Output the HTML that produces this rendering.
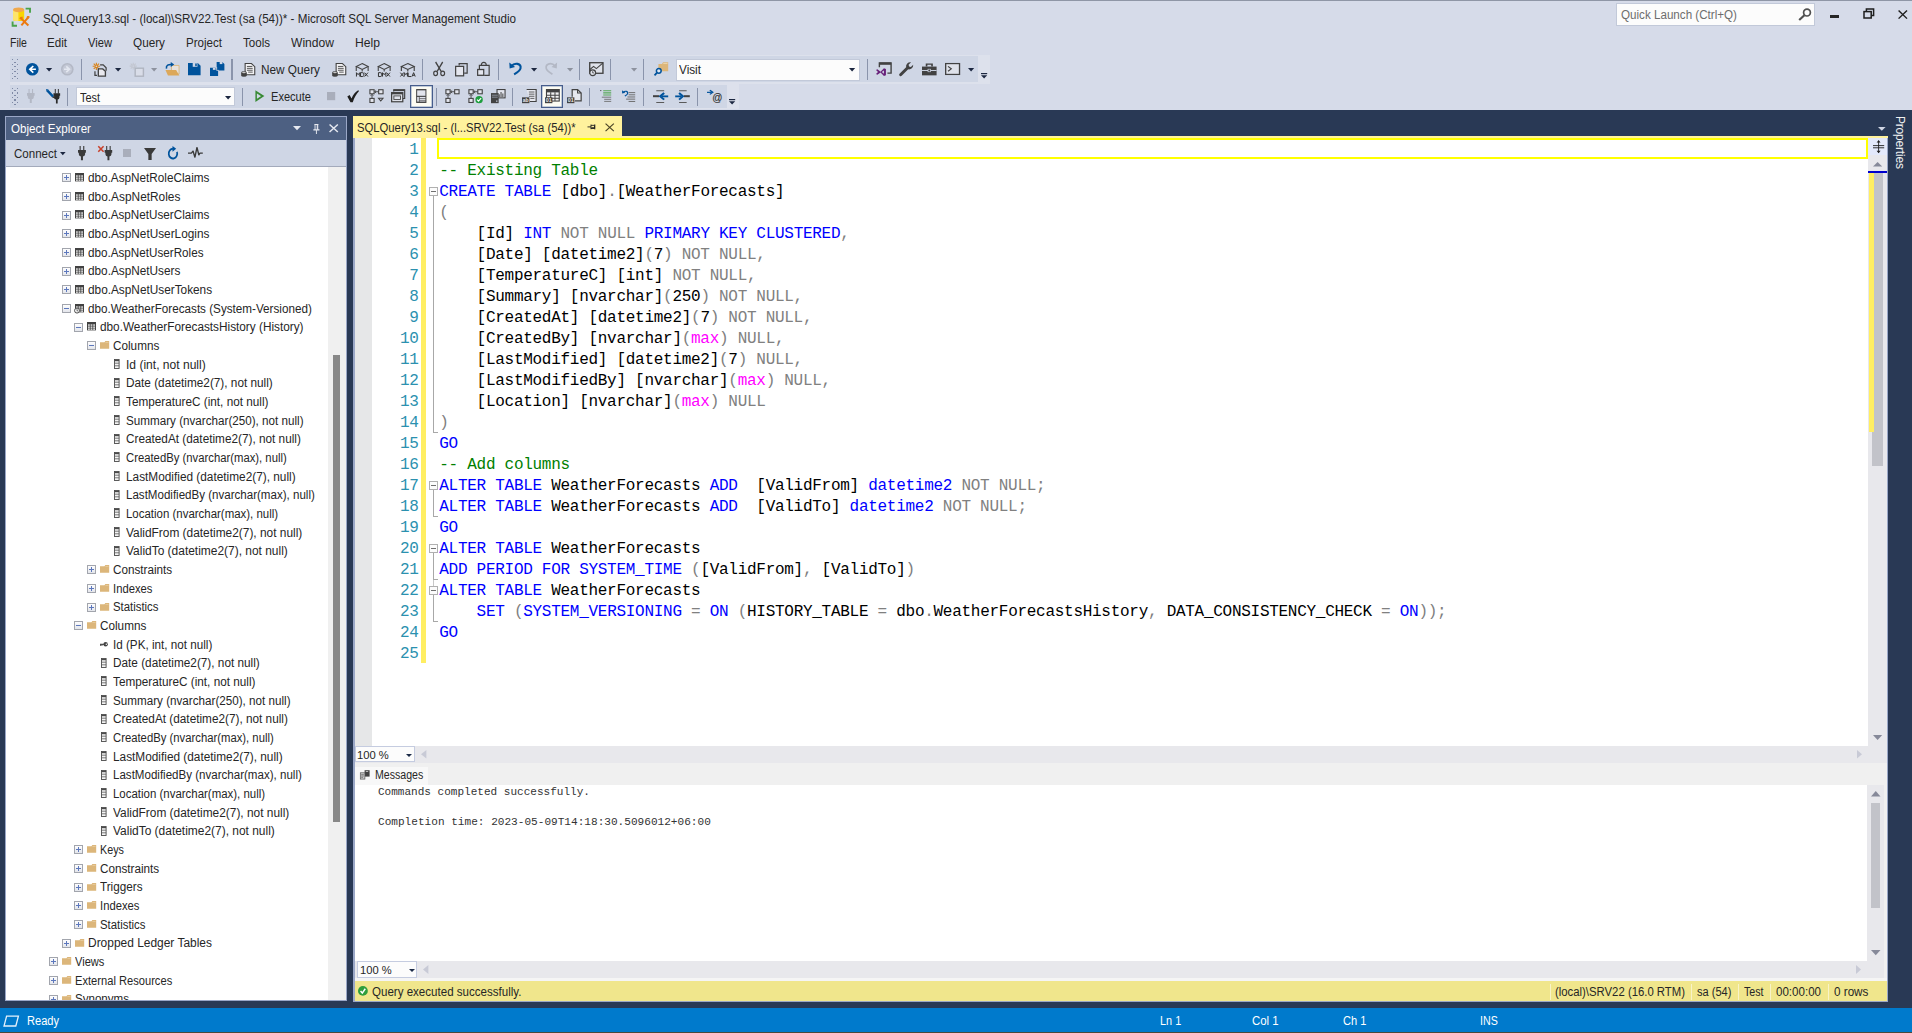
<!DOCTYPE html>
<html><head><meta charset="utf-8"><title>SSMS</title><style>
html,body{margin:0;padding:0;}
body{width:1912px;height:1033px;overflow:hidden;background:#d6dbe9;position:relative;font-family:"Liberation Sans",sans-serif;}
.t{position:absolute;white-space:pre;line-height:1;}
svg{position:absolute;overflow:visible;}
</style></head><body>
<div style="position:absolute;left:0px;top:0px;width:1912px;height:1px;background:#8f96a6;"></div>
<div style="position:absolute;left:10px;top:55px;width:979.7px;height:28.7px;background:#dde1ec;"></div>
<div style="position:absolute;left:10px;top:56.3px;width:968px;height:25.8px;background:#cfd6e5;"></div>
<div style="position:absolute;left:10px;top:83.9px;width:728.5px;height:24.9px;background:#dde1ec;"></div>
<div style="position:absolute;left:10px;top:85px;width:716.6px;height:23px;background:#cfd6e5;"></div>
<div style="position:absolute;left:0px;top:110px;width:1912px;height:898px;background:#293955;"></div>
<div style="position:absolute;left:0px;top:1008px;width:1912px;height:25px;background:#007acc;"></div>
<div style="position:absolute;left:0px;top:1032px;width:1912px;height:1px;background:#4a4a3c;"></div>
<span class="t" id="t0" style="left:43px;top:11.98px;font-size:13px;color:#262626;font-family:'Liberation Sans', sans-serif;transform:scaleX(0.8956);transform-origin:0 0;">SQLQuery13.sql - (local)\SRV22.Test (sa (54))* - Microsoft SQL Server Management Studio</span>
<div style="position:absolute;left:1616px;top:3px;width:199px;height:23px;background:#fcfcfc;border:1px solid #c2c9d9;box-sizing:border-box;"></div>
<span class="t" id="t1" style="left:1621px;top:9.25px;font-size:12.5px;color:#6d6d6d;font-family:'Liberation Sans', sans-serif;transform:scaleX(0.9302);transform-origin:0 0;">Quick Launch (Ctrl+Q)</span>
<span class="t" id="t2" style="left:10px;top:37.25px;font-size:12.5px;color:#262626;font-family:'Liberation Sans', sans-serif;transform:scaleX(0.8434);transform-origin:0 0;">File</span>
<span class="t" id="t3" style="left:47px;top:37.25px;font-size:12.5px;color:#262626;font-family:'Liberation Sans', sans-serif;transform:scaleX(0.9282);transform-origin:0 0;">Edit</span>
<span class="t" id="t4" style="left:88px;top:37.25px;font-size:12.5px;color:#262626;font-family:'Liberation Sans', sans-serif;transform:scaleX(0.8930);transform-origin:0 0;">View</span>
<span class="t" id="t5" style="left:133px;top:37.25px;font-size:12.5px;color:#262626;font-family:'Liberation Sans', sans-serif;transform:scaleX(0.9399);transform-origin:0 0;">Query</span>
<span class="t" id="t6" style="left:186px;top:37.25px;font-size:12.5px;color:#262626;font-family:'Liberation Sans', sans-serif;transform:scaleX(0.9253);transform-origin:0 0;">Project</span>
<span class="t" id="t7" style="left:243px;top:37.25px;font-size:12.5px;color:#262626;font-family:'Liberation Sans', sans-serif;transform:scaleX(0.9251);transform-origin:0 0;">Tools</span>
<span class="t" id="t8" style="left:291px;top:37.25px;font-size:12.5px;color:#262626;font-family:'Liberation Sans', sans-serif;transform:scaleX(0.9670);transform-origin:0 0;">Window</span>
<span class="t" id="t9" style="left:355px;top:37.25px;font-size:12.5px;color:#262626;font-family:'Liberation Sans', sans-serif;transform:scaleX(0.9721);transform-origin:0 0;">Help</span>
<span class="t" id="t10" style="left:261px;top:64.25px;font-size:12.5px;color:#262626;font-family:'Liberation Sans', sans-serif;transform:scaleX(0.9435);transform-origin:0 0;">New Query</span>
<span class="t" id="t11" style="left:271px;top:91.25px;font-size:12.5px;color:#262626;font-family:'Liberation Sans', sans-serif;transform:scaleX(0.8855);transform-origin:0 0;">Execute</span>
<div style="position:absolute;left:675.8px;top:58.5px;width:183.8px;height:22px;background:#fcfcfc;border:1px solid #c2c9d9;box-sizing:border-box;"></div>
<span class="t" id="t12" style="left:679px;top:64.25px;font-size:12.5px;color:#262626;font-family:'Liberation Sans', sans-serif;transform:scaleX(0.9405);transform-origin:0 0;">Visit</span>
<div style="position:absolute;left:76.3px;top:87.4px;width:159.1px;height:18.6px;background:#fcfcfc;border:1px solid #c2c9d9;box-sizing:border-box;"></div>
<span class="t" id="t13" style="left:80px;top:91.75px;font-size:12.5px;color:#262626;font-family:'Liberation Sans', sans-serif;transform:scaleX(0.8719);transform-origin:0 0;">Test</span>
<div style="position:absolute;left:5px;top:116px;width:342.2px;height:885px;background:#9aa7c7;"></div>
<div style="position:absolute;left:6px;top:117px;width:340.1px;height:23px;background:#4d6082;"></div>
<span class="t" id="t14" style="left:11px;top:122.75px;font-size:12.5px;color:#ffffff;font-family:'Liberation Sans', sans-serif;transform:scaleX(0.9285);transform-origin:0 0;">Object Explorer</span>
<div style="position:absolute;left:6px;top:140px;width:340.1px;height:26px;background:#cfd6e5;"></div>
<span class="t" id="t15" style="left:14px;top:148.25px;font-size:12.5px;color:#262626;font-family:'Liberation Sans', sans-serif;transform:scaleX(0.9235);transform-origin:0 0;">Connect</span>
<div style="position:absolute;left:6px;top:166px;width:340.1px;height:1px;background:#a3aabb;"></div>
<div style="position:absolute;left:6px;top:167px;width:340.1px;height:833px;background:#ffffff;"></div>
<div style="position:absolute;left:328.1px;top:167px;width:18px;height:833px;background:#f0f0f0;"></div>
<div style="position:absolute;left:332.8px;top:355px;width:7.2px;height:467px;background:#888888;"></div>
<div style="position:absolute;left:6px;top:167px;width:322px;height:833px;overflow:hidden;">
<span class="t" id="t16" style="left:81.53px;top:4.92px;font-size:12.5px;color:#262626;font-family:'Liberation Sans', sans-serif;transform:scaleX(0.9394);transform-origin:0 0;">dbo.AspNetRoleClaims</span>
<svg style="left:55.73px;top:6.27px" width="9" height="9" viewBox="0 0 9 9" preserveAspectRatio="none"><defs><linearGradient id="eg0" x1="0" y1="0" x2="0" y2="1"><stop offset="0" stop-color="#ffffff"/><stop offset="1" stop-color="#e2e4ea"/></linearGradient></defs><rect x="0.5" y="0.5" width="8" height="8" fill="url(#eg0)" stroke="#a2a5ad" stroke-width="1"/><rect x="2" y="4" width="5" height="1" fill="#5d78bd"/><rect x="4" y="2" width="1" height="5" fill="#5d78bd"/></svg>
<svg style="left:68.53px;top:6.07px" width="9" height="9.4" viewBox="0 0 9 9.4" preserveAspectRatio="none"><rect x="0" y="0" width="9" height="8.4" fill="#424242"/><rect x="1" y="2.4" width="1.8" height="1.3" fill="#f4f4f4"/><rect x="1" y="4.5" width="1.8" height="1.3" fill="#f4f4f4"/><rect x="1" y="6.5" width="1.8" height="1.3" fill="#f4f4f4"/><rect x="3.6" y="2.4" width="1.8" height="1.3" fill="#f4f4f4"/><rect x="3.6" y="4.5" width="1.8" height="1.3" fill="#f4f4f4"/><rect x="3.6" y="6.5" width="1.8" height="1.3" fill="#f4f4f4"/><rect x="6.2" y="2.4" width="1.8" height="1.3" fill="#f4f4f4"/><rect x="6.2" y="4.5" width="1.8" height="1.3" fill="#f4f4f4"/><rect x="6.2" y="6.5" width="1.8" height="1.3" fill="#f4f4f4"/></svg>
<span class="t" id="t17" style="left:81.53px;top:23.5867px;font-size:12.5px;color:#262626;font-family:'Liberation Sans', sans-serif;transform:scaleX(0.9498);transform-origin:0 0;">dbo.AspNetRoles</span>
<svg style="left:55.73px;top:24.9367px" width="9" height="9" viewBox="0 0 9 9" preserveAspectRatio="none"><defs><linearGradient id="eg1" x1="0" y1="0" x2="0" y2="1"><stop offset="0" stop-color="#ffffff"/><stop offset="1" stop-color="#e2e4ea"/></linearGradient></defs><rect x="0.5" y="0.5" width="8" height="8" fill="url(#eg1)" stroke="#a2a5ad" stroke-width="1"/><rect x="2" y="4" width="5" height="1" fill="#5d78bd"/><rect x="4" y="2" width="1" height="5" fill="#5d78bd"/></svg>
<svg style="left:68.53px;top:24.7367px" width="9" height="9.4" viewBox="0 0 9 9.4" preserveAspectRatio="none"><rect x="0" y="0" width="9" height="8.4" fill="#424242"/><rect x="1" y="2.4" width="1.8" height="1.3" fill="#f4f4f4"/><rect x="1" y="4.5" width="1.8" height="1.3" fill="#f4f4f4"/><rect x="1" y="6.5" width="1.8" height="1.3" fill="#f4f4f4"/><rect x="3.6" y="2.4" width="1.8" height="1.3" fill="#f4f4f4"/><rect x="3.6" y="4.5" width="1.8" height="1.3" fill="#f4f4f4"/><rect x="3.6" y="6.5" width="1.8" height="1.3" fill="#f4f4f4"/><rect x="6.2" y="2.4" width="1.8" height="1.3" fill="#f4f4f4"/><rect x="6.2" y="4.5" width="1.8" height="1.3" fill="#f4f4f4"/><rect x="6.2" y="6.5" width="1.8" height="1.3" fill="#f4f4f4"/></svg>
<span class="t" id="t18" style="left:81.53px;top:42.2534px;font-size:12.5px;color:#262626;font-family:'Liberation Sans', sans-serif;transform:scaleX(0.9344);transform-origin:0 0;">dbo.AspNetUserClaims</span>
<svg style="left:55.73px;top:43.6034px" width="9" height="9" viewBox="0 0 9 9" preserveAspectRatio="none"><defs><linearGradient id="eg2" x1="0" y1="0" x2="0" y2="1"><stop offset="0" stop-color="#ffffff"/><stop offset="1" stop-color="#e2e4ea"/></linearGradient></defs><rect x="0.5" y="0.5" width="8" height="8" fill="url(#eg2)" stroke="#a2a5ad" stroke-width="1"/><rect x="2" y="4" width="5" height="1" fill="#5d78bd"/><rect x="4" y="2" width="1" height="5" fill="#5d78bd"/></svg>
<svg style="left:68.53px;top:43.4034px" width="9" height="9.4" viewBox="0 0 9 9.4" preserveAspectRatio="none"><rect x="0" y="0" width="9" height="8.4" fill="#424242"/><rect x="1" y="2.4" width="1.8" height="1.3" fill="#f4f4f4"/><rect x="1" y="4.5" width="1.8" height="1.3" fill="#f4f4f4"/><rect x="1" y="6.5" width="1.8" height="1.3" fill="#f4f4f4"/><rect x="3.6" y="2.4" width="1.8" height="1.3" fill="#f4f4f4"/><rect x="3.6" y="4.5" width="1.8" height="1.3" fill="#f4f4f4"/><rect x="3.6" y="6.5" width="1.8" height="1.3" fill="#f4f4f4"/><rect x="6.2" y="2.4" width="1.8" height="1.3" fill="#f4f4f4"/><rect x="6.2" y="4.5" width="1.8" height="1.3" fill="#f4f4f4"/><rect x="6.2" y="6.5" width="1.8" height="1.3" fill="#f4f4f4"/></svg>
<span class="t" id="t19" style="left:81.53px;top:60.9201px;font-size:12.5px;color:#262626;font-family:'Liberation Sans', sans-serif;transform:scaleX(0.9444);transform-origin:0 0;">dbo.AspNetUserLogins</span>
<svg style="left:55.73px;top:62.2701px" width="9" height="9" viewBox="0 0 9 9" preserveAspectRatio="none"><defs><linearGradient id="eg3" x1="0" y1="0" x2="0" y2="1"><stop offset="0" stop-color="#ffffff"/><stop offset="1" stop-color="#e2e4ea"/></linearGradient></defs><rect x="0.5" y="0.5" width="8" height="8" fill="url(#eg3)" stroke="#a2a5ad" stroke-width="1"/><rect x="2" y="4" width="5" height="1" fill="#5d78bd"/><rect x="4" y="2" width="1" height="5" fill="#5d78bd"/></svg>
<svg style="left:68.53px;top:62.0701px" width="9" height="9.4" viewBox="0 0 9 9.4" preserveAspectRatio="none"><rect x="0" y="0" width="9" height="8.4" fill="#424242"/><rect x="1" y="2.4" width="1.8" height="1.3" fill="#f4f4f4"/><rect x="1" y="4.5" width="1.8" height="1.3" fill="#f4f4f4"/><rect x="1" y="6.5" width="1.8" height="1.3" fill="#f4f4f4"/><rect x="3.6" y="2.4" width="1.8" height="1.3" fill="#f4f4f4"/><rect x="3.6" y="4.5" width="1.8" height="1.3" fill="#f4f4f4"/><rect x="3.6" y="6.5" width="1.8" height="1.3" fill="#f4f4f4"/><rect x="6.2" y="2.4" width="1.8" height="1.3" fill="#f4f4f4"/><rect x="6.2" y="4.5" width="1.8" height="1.3" fill="#f4f4f4"/><rect x="6.2" y="6.5" width="1.8" height="1.3" fill="#f4f4f4"/></svg>
<span class="t" id="t20" style="left:81.53px;top:79.5868px;font-size:12.5px;color:#262626;font-family:'Liberation Sans', sans-serif;transform:scaleX(0.9339);transform-origin:0 0;">dbo.AspNetUserRoles</span>
<svg style="left:55.73px;top:80.9368px" width="9" height="9" viewBox="0 0 9 9" preserveAspectRatio="none"><defs><linearGradient id="eg4" x1="0" y1="0" x2="0" y2="1"><stop offset="0" stop-color="#ffffff"/><stop offset="1" stop-color="#e2e4ea"/></linearGradient></defs><rect x="0.5" y="0.5" width="8" height="8" fill="url(#eg4)" stroke="#a2a5ad" stroke-width="1"/><rect x="2" y="4" width="5" height="1" fill="#5d78bd"/><rect x="4" y="2" width="1" height="5" fill="#5d78bd"/></svg>
<svg style="left:68.53px;top:80.7368px" width="9" height="9.4" viewBox="0 0 9 9.4" preserveAspectRatio="none"><rect x="0" y="0" width="9" height="8.4" fill="#424242"/><rect x="1" y="2.4" width="1.8" height="1.3" fill="#f4f4f4"/><rect x="1" y="4.5" width="1.8" height="1.3" fill="#f4f4f4"/><rect x="1" y="6.5" width="1.8" height="1.3" fill="#f4f4f4"/><rect x="3.6" y="2.4" width="1.8" height="1.3" fill="#f4f4f4"/><rect x="3.6" y="4.5" width="1.8" height="1.3" fill="#f4f4f4"/><rect x="3.6" y="6.5" width="1.8" height="1.3" fill="#f4f4f4"/><rect x="6.2" y="2.4" width="1.8" height="1.3" fill="#f4f4f4"/><rect x="6.2" y="4.5" width="1.8" height="1.3" fill="#f4f4f4"/><rect x="6.2" y="6.5" width="1.8" height="1.3" fill="#f4f4f4"/></svg>
<span class="t" id="t21" style="left:81.53px;top:98.2535px;font-size:12.5px;color:#262626;font-family:'Liberation Sans', sans-serif;transform:scaleX(0.9432);transform-origin:0 0;">dbo.AspNetUsers</span>
<svg style="left:55.73px;top:99.6035px" width="9" height="9" viewBox="0 0 9 9" preserveAspectRatio="none"><defs><linearGradient id="eg5" x1="0" y1="0" x2="0" y2="1"><stop offset="0" stop-color="#ffffff"/><stop offset="1" stop-color="#e2e4ea"/></linearGradient></defs><rect x="0.5" y="0.5" width="8" height="8" fill="url(#eg5)" stroke="#a2a5ad" stroke-width="1"/><rect x="2" y="4" width="5" height="1" fill="#5d78bd"/><rect x="4" y="2" width="1" height="5" fill="#5d78bd"/></svg>
<svg style="left:68.53px;top:99.403px" width="9" height="9.4" viewBox="0 0 9 9.4" preserveAspectRatio="none"><rect x="0" y="0" width="9" height="8.4" fill="#424242"/><rect x="1" y="2.4" width="1.8" height="1.3" fill="#f4f4f4"/><rect x="1" y="4.5" width="1.8" height="1.3" fill="#f4f4f4"/><rect x="1" y="6.5" width="1.8" height="1.3" fill="#f4f4f4"/><rect x="3.6" y="2.4" width="1.8" height="1.3" fill="#f4f4f4"/><rect x="3.6" y="4.5" width="1.8" height="1.3" fill="#f4f4f4"/><rect x="3.6" y="6.5" width="1.8" height="1.3" fill="#f4f4f4"/><rect x="6.2" y="2.4" width="1.8" height="1.3" fill="#f4f4f4"/><rect x="6.2" y="4.5" width="1.8" height="1.3" fill="#f4f4f4"/><rect x="6.2" y="6.5" width="1.8" height="1.3" fill="#f4f4f4"/></svg>
<span class="t" id="t22" style="left:81.53px;top:116.92px;font-size:12.5px;color:#262626;font-family:'Liberation Sans', sans-serif;transform:scaleX(0.9450);transform-origin:0 0;">dbo.AspNetUserTokens</span>
<svg style="left:55.73px;top:118.27px" width="9" height="9" viewBox="0 0 9 9" preserveAspectRatio="none"><defs><linearGradient id="eg6" x1="0" y1="0" x2="0" y2="1"><stop offset="0" stop-color="#ffffff"/><stop offset="1" stop-color="#e2e4ea"/></linearGradient></defs><rect x="0.5" y="0.5" width="8" height="8" fill="url(#eg6)" stroke="#a2a5ad" stroke-width="1"/><rect x="2" y="4" width="5" height="1" fill="#5d78bd"/><rect x="4" y="2" width="1" height="5" fill="#5d78bd"/></svg>
<svg style="left:68.53px;top:118.07px" width="9" height="9.4" viewBox="0 0 9 9.4" preserveAspectRatio="none"><rect x="0" y="0" width="9" height="8.4" fill="#424242"/><rect x="1" y="2.4" width="1.8" height="1.3" fill="#f4f4f4"/><rect x="1" y="4.5" width="1.8" height="1.3" fill="#f4f4f4"/><rect x="1" y="6.5" width="1.8" height="1.3" fill="#f4f4f4"/><rect x="3.6" y="2.4" width="1.8" height="1.3" fill="#f4f4f4"/><rect x="3.6" y="4.5" width="1.8" height="1.3" fill="#f4f4f4"/><rect x="3.6" y="6.5" width="1.8" height="1.3" fill="#f4f4f4"/><rect x="6.2" y="2.4" width="1.8" height="1.3" fill="#f4f4f4"/><rect x="6.2" y="4.5" width="1.8" height="1.3" fill="#f4f4f4"/><rect x="6.2" y="6.5" width="1.8" height="1.3" fill="#f4f4f4"/></svg>
<span class="t" id="t23" style="left:81.53px;top:135.587px;font-size:12.5px;color:#262626;font-family:'Liberation Sans', sans-serif;transform:scaleX(0.9346);transform-origin:0 0;">dbo.WeatherForecasts (System-Versioned)</span>
<svg style="left:55.73px;top:136.937px" width="9" height="9" viewBox="0 0 9 9" preserveAspectRatio="none"><defs><linearGradient id="eg7" x1="0" y1="0" x2="0" y2="1"><stop offset="0" stop-color="#ffffff"/><stop offset="1" stop-color="#e2e4ea"/></linearGradient></defs><rect x="0.5" y="0.5" width="8" height="8" fill="url(#eg7)" stroke="#a2a5ad" stroke-width="1"/><rect x="2" y="4" width="5" height="1" fill="#5d78bd"/></svg>
<svg style="left:69.03px;top:136.737px" width="9" height="9.4" viewBox="0 0 9 9.4" preserveAspectRatio="none"><rect x="0" y="0" width="9" height="8.4" fill="#424242"/><rect x="1" y="2.4" width="1.8" height="1.3" fill="#f4f4f4"/><rect x="1" y="4.5" width="1.8" height="1.3" fill="#f4f4f4"/><rect x="1" y="6.5" width="1.8" height="1.3" fill="#f4f4f4"/><rect x="3.6" y="2.4" width="1.8" height="1.3" fill="#f4f4f4"/><rect x="3.6" y="4.5" width="1.8" height="1.3" fill="#f4f4f4"/><rect x="3.6" y="6.5" width="1.8" height="1.3" fill="#f4f4f4"/><rect x="6.2" y="2.4" width="1.8" height="1.3" fill="#f4f4f4"/><rect x="6.2" y="4.5" width="1.8" height="1.3" fill="#f4f4f4"/><rect x="6.2" y="6.5" width="1.8" height="1.3" fill="#f4f4f4"/><circle cx="2" cy="6.6" r="2.5" fill="#f0f0f0" stroke="#424242" stroke-width="0.9"/><path d="M2 5.2V6.8H3.2" stroke="#424242" stroke-width="0.7" fill="none"/></svg>
<span class="t" id="t24" style="left:94.26px;top:154.254px;font-size:12.5px;color:#262626;font-family:'Liberation Sans', sans-serif;transform:scaleX(0.9429);transform-origin:0 0;">dbo.WeatherForecastsHistory (History)</span>
<svg style="left:68.46px;top:155.604px" width="9" height="9" viewBox="0 0 9 9" preserveAspectRatio="none"><defs><linearGradient id="eg8" x1="0" y1="0" x2="0" y2="1"><stop offset="0" stop-color="#ffffff"/><stop offset="1" stop-color="#e2e4ea"/></linearGradient></defs><rect x="0.5" y="0.5" width="8" height="8" fill="url(#eg8)" stroke="#a2a5ad" stroke-width="1"/><rect x="2" y="4" width="5" height="1" fill="#5d78bd"/></svg>
<svg style="left:81.26px;top:155.404px" width="9" height="9.4" viewBox="0 0 9 9.4" preserveAspectRatio="none"><rect x="0" y="0" width="9" height="8.4" fill="#424242"/><rect x="1" y="2.4" width="1.8" height="1.3" fill="#f4f4f4"/><rect x="1" y="4.5" width="1.8" height="1.3" fill="#f4f4f4"/><rect x="1" y="6.5" width="1.8" height="1.3" fill="#f4f4f4"/><rect x="3.6" y="2.4" width="1.8" height="1.3" fill="#f4f4f4"/><rect x="3.6" y="4.5" width="1.8" height="1.3" fill="#f4f4f4"/><rect x="3.6" y="6.5" width="1.8" height="1.3" fill="#f4f4f4"/><rect x="6.2" y="2.4" width="1.8" height="1.3" fill="#f4f4f4"/><rect x="6.2" y="4.5" width="1.8" height="1.3" fill="#f4f4f4"/><rect x="6.2" y="6.5" width="1.8" height="1.3" fill="#f4f4f4"/></svg>
<span class="t" id="t25" style="left:106.99px;top:172.92px;font-size:12.5px;color:#262626;font-family:'Liberation Sans', sans-serif;transform:scaleX(0.9386);transform-origin:0 0;">Columns</span>
<svg style="left:81.19px;top:174.27px" width="9" height="9" viewBox="0 0 9 9" preserveAspectRatio="none"><defs><linearGradient id="eg9" x1="0" y1="0" x2="0" y2="1"><stop offset="0" stop-color="#ffffff"/><stop offset="1" stop-color="#e2e4ea"/></linearGradient></defs><rect x="0.5" y="0.5" width="8" height="8" fill="url(#eg9)" stroke="#a2a5ad" stroke-width="1"/><rect x="2" y="4" width="5" height="1" fill="#5d78bd"/></svg>
<svg style="left:94.09px;top:174.17px" width="9.2" height="7.7" viewBox="0 0 8.6 7.3" preserveAspectRatio="none"><path d="M0 1.2H4.2L5 0H8.6V7.3H0Z" fill="#dcb67a"/><path d="M5.2 0.9H8V1.5H4.9Z" fill="#efdcb8"/></svg>
<span class="t" id="t26" style="left:119.72px;top:191.587px;font-size:12.5px;color:#262626;font-family:'Liberation Sans', sans-serif;transform:scaleX(0.9639);transform-origin:0 0;">Id (int, not null)</span>
<svg style="left:107.92px;top:192.137px" width="5.6" height="10" viewBox="0 0 5.6 10" preserveAspectRatio="none"><rect x="0.5" y="0.5" width="4.6" height="9" fill="#f4f4f4" stroke="#4a4a4a" stroke-width="0.9"/><path d="M0.5 1.6H5.1" stroke="#4a4a4a" stroke-width="1.2"/><path d="M0.5 4.2H5.1M0.5 6.8H5.1" stroke="#5a5a5a" stroke-width="0.8"/></svg>
<span class="t" id="t27" style="left:119.72px;top:210.254px;font-size:12.5px;color:#262626;font-family:'Liberation Sans', sans-serif;transform:scaleX(0.9432);transform-origin:0 0;">Date (datetime2(7), not null)</span>
<svg style="left:107.92px;top:210.804px" width="5.6" height="10" viewBox="0 0 5.6 10" preserveAspectRatio="none"><rect x="0.5" y="0.5" width="4.6" height="9" fill="#f4f4f4" stroke="#4a4a4a" stroke-width="0.9"/><path d="M0.5 1.6H5.1" stroke="#4a4a4a" stroke-width="1.2"/><path d="M0.5 4.2H5.1M0.5 6.8H5.1" stroke="#5a5a5a" stroke-width="0.8"/></svg>
<span class="t" id="t28" style="left:119.72px;top:228.92px;font-size:12.5px;color:#262626;font-family:'Liberation Sans', sans-serif;transform:scaleX(0.9409);transform-origin:0 0;">TemperatureC (int, not null)</span>
<svg style="left:107.92px;top:229.47px" width="5.6" height="10" viewBox="0 0 5.6 10" preserveAspectRatio="none"><rect x="0.5" y="0.5" width="4.6" height="9" fill="#f4f4f4" stroke="#4a4a4a" stroke-width="0.9"/><path d="M0.5 1.6H5.1" stroke="#4a4a4a" stroke-width="1.2"/><path d="M0.5 4.2H5.1M0.5 6.8H5.1" stroke="#5a5a5a" stroke-width="0.8"/></svg>
<span class="t" id="t29" style="left:119.72px;top:247.587px;font-size:12.5px;color:#262626;font-family:'Liberation Sans', sans-serif;transform:scaleX(0.9330);transform-origin:0 0;">Summary (nvarchar(250), not null)</span>
<svg style="left:107.92px;top:248.137px" width="5.6" height="10" viewBox="0 0 5.6 10" preserveAspectRatio="none"><rect x="0.5" y="0.5" width="4.6" height="9" fill="#f4f4f4" stroke="#4a4a4a" stroke-width="0.9"/><path d="M0.5 1.6H5.1" stroke="#4a4a4a" stroke-width="1.2"/><path d="M0.5 4.2H5.1M0.5 6.8H5.1" stroke="#5a5a5a" stroke-width="0.8"/></svg>
<span class="t" id="t30" style="left:119.72px;top:266.254px;font-size:12.5px;color:#262626;font-family:'Liberation Sans', sans-serif;transform:scaleX(0.9428);transform-origin:0 0;">CreatedAt (datetime2(7), not null)</span>
<svg style="left:107.92px;top:266.804px" width="5.6" height="10" viewBox="0 0 5.6 10" preserveAspectRatio="none"><rect x="0.5" y="0.5" width="4.6" height="9" fill="#f4f4f4" stroke="#4a4a4a" stroke-width="0.9"/><path d="M0.5 1.6H5.1" stroke="#4a4a4a" stroke-width="1.2"/><path d="M0.5 4.2H5.1M0.5 6.8H5.1" stroke="#5a5a5a" stroke-width="0.8"/></svg>
<span class="t" id="t31" style="left:119.72px;top:284.92px;font-size:12.5px;color:#262626;font-family:'Liberation Sans', sans-serif;transform:scaleX(0.9036);transform-origin:0 0;">CreatedBy (nvarchar(max), null)</span>
<svg style="left:107.92px;top:285.47px" width="5.6" height="10" viewBox="0 0 5.6 10" preserveAspectRatio="none"><rect x="0.5" y="0.5" width="4.6" height="9" fill="#f4f4f4" stroke="#4a4a4a" stroke-width="0.9"/><path d="M0.5 1.6H5.1" stroke="#4a4a4a" stroke-width="1.2"/><path d="M0.5 4.2H5.1M0.5 6.8H5.1" stroke="#5a5a5a" stroke-width="0.8"/></svg>
<span class="t" id="t32" style="left:119.72px;top:303.587px;font-size:12.5px;color:#262626;font-family:'Liberation Sans', sans-serif;transform:scaleX(0.9462);transform-origin:0 0;">LastModified (datetime2(7), null)</span>
<svg style="left:107.92px;top:304.137px" width="5.6" height="10" viewBox="0 0 5.6 10" preserveAspectRatio="none"><rect x="0.5" y="0.5" width="4.6" height="9" fill="#f4f4f4" stroke="#4a4a4a" stroke-width="0.9"/><path d="M0.5 1.6H5.1" stroke="#4a4a4a" stroke-width="1.2"/><path d="M0.5 4.2H5.1M0.5 6.8H5.1" stroke="#5a5a5a" stroke-width="0.8"/></svg>
<span class="t" id="t33" style="left:119.72px;top:322.254px;font-size:12.5px;color:#262626;font-family:'Liberation Sans', sans-serif;transform:scaleX(0.9244);transform-origin:0 0;">LastModifiedBy (nvarchar(max), null)</span>
<svg style="left:107.92px;top:322.804px" width="5.6" height="10" viewBox="0 0 5.6 10" preserveAspectRatio="none"><rect x="0.5" y="0.5" width="4.6" height="9" fill="#f4f4f4" stroke="#4a4a4a" stroke-width="0.9"/><path d="M0.5 1.6H5.1" stroke="#4a4a4a" stroke-width="1.2"/><path d="M0.5 4.2H5.1M0.5 6.8H5.1" stroke="#5a5a5a" stroke-width="0.8"/></svg>
<span class="t" id="t34" style="left:119.72px;top:340.921px;font-size:12.5px;color:#262626;font-family:'Liberation Sans', sans-serif;transform:scaleX(0.9160);transform-origin:0 0;">Location (nvarchar(max), null)</span>
<svg style="left:107.92px;top:341.471px" width="5.6" height="10" viewBox="0 0 5.6 10" preserveAspectRatio="none"><rect x="0.5" y="0.5" width="4.6" height="9" fill="#f4f4f4" stroke="#4a4a4a" stroke-width="0.9"/><path d="M0.5 1.6H5.1" stroke="#4a4a4a" stroke-width="1.2"/><path d="M0.5 4.2H5.1M0.5 6.8H5.1" stroke="#5a5a5a" stroke-width="0.8"/></svg>
<span class="t" id="t35" style="left:119.72px;top:359.587px;font-size:12.5px;color:#262626;font-family:'Liberation Sans', sans-serif;transform:scaleX(0.9516);transform-origin:0 0;">ValidFrom (datetime2(7), not null)</span>
<svg style="left:107.92px;top:360.137px" width="5.6" height="10" viewBox="0 0 5.6 10" preserveAspectRatio="none"><rect x="0.5" y="0.5" width="4.6" height="9" fill="#f4f4f4" stroke="#4a4a4a" stroke-width="0.9"/><path d="M0.5 1.6H5.1" stroke="#4a4a4a" stroke-width="1.2"/><path d="M0.5 4.2H5.1M0.5 6.8H5.1" stroke="#5a5a5a" stroke-width="0.8"/></svg>
<span class="t" id="t36" style="left:119.72px;top:378.254px;font-size:12.5px;color:#262626;font-family:'Liberation Sans', sans-serif;transform:scaleX(0.9557);transform-origin:0 0;">ValidTo (datetime2(7), not null)</span>
<svg style="left:107.92px;top:378.804px" width="5.6" height="10" viewBox="0 0 5.6 10" preserveAspectRatio="none"><rect x="0.5" y="0.5" width="4.6" height="9" fill="#f4f4f4" stroke="#4a4a4a" stroke-width="0.9"/><path d="M0.5 1.6H5.1" stroke="#4a4a4a" stroke-width="1.2"/><path d="M0.5 4.2H5.1M0.5 6.8H5.1" stroke="#5a5a5a" stroke-width="0.8"/></svg>
<span class="t" id="t37" style="left:106.99px;top:396.921px;font-size:12.5px;color:#262626;font-family:'Liberation Sans', sans-serif;transform:scaleX(0.9362);transform-origin:0 0;">Constraints</span>
<svg style="left:81.19px;top:398.271px" width="9" height="9" viewBox="0 0 9 9" preserveAspectRatio="none"><defs><linearGradient id="eg21" x1="0" y1="0" x2="0" y2="1"><stop offset="0" stop-color="#ffffff"/><stop offset="1" stop-color="#e2e4ea"/></linearGradient></defs><rect x="0.5" y="0.5" width="8" height="8" fill="url(#eg21)" stroke="#a2a5ad" stroke-width="1"/><rect x="2" y="4" width="5" height="1" fill="#5d78bd"/><rect x="4" y="2" width="1" height="5" fill="#5d78bd"/></svg>
<svg style="left:94.09px;top:398.171px" width="9.2" height="7.7" viewBox="0 0 8.6 7.3" preserveAspectRatio="none"><path d="M0 1.2H4.2L5 0H8.6V7.3H0Z" fill="#dcb67a"/><path d="M5.2 0.9H8V1.5H4.9Z" fill="#efdcb8"/></svg>
<span class="t" id="t38" style="left:106.99px;top:415.587px;font-size:12.5px;color:#262626;font-family:'Liberation Sans', sans-serif;transform:scaleX(0.8999);transform-origin:0 0;">Indexes</span>
<svg style="left:81.19px;top:416.937px" width="9" height="9" viewBox="0 0 9 9" preserveAspectRatio="none"><defs><linearGradient id="eg22" x1="0" y1="0" x2="0" y2="1"><stop offset="0" stop-color="#ffffff"/><stop offset="1" stop-color="#e2e4ea"/></linearGradient></defs><rect x="0.5" y="0.5" width="8" height="8" fill="url(#eg22)" stroke="#a2a5ad" stroke-width="1"/><rect x="2" y="4" width="5" height="1" fill="#5d78bd"/><rect x="4" y="2" width="1" height="5" fill="#5d78bd"/></svg>
<svg style="left:94.09px;top:416.837px" width="9.2" height="7.7" viewBox="0 0 8.6 7.3" preserveAspectRatio="none"><path d="M0 1.2H4.2L5 0H8.6V7.3H0Z" fill="#dcb67a"/><path d="M5.2 0.9H8V1.5H4.9Z" fill="#efdcb8"/></svg>
<span class="t" id="t39" style="left:106.99px;top:434.254px;font-size:12.5px;color:#262626;font-family:'Liberation Sans', sans-serif;transform:scaleX(0.9097);transform-origin:0 0;">Statistics</span>
<svg style="left:81.19px;top:435.604px" width="9" height="9" viewBox="0 0 9 9" preserveAspectRatio="none"><defs><linearGradient id="eg23" x1="0" y1="0" x2="0" y2="1"><stop offset="0" stop-color="#ffffff"/><stop offset="1" stop-color="#e2e4ea"/></linearGradient></defs><rect x="0.5" y="0.5" width="8" height="8" fill="url(#eg23)" stroke="#a2a5ad" stroke-width="1"/><rect x="2" y="4" width="5" height="1" fill="#5d78bd"/><rect x="4" y="2" width="1" height="5" fill="#5d78bd"/></svg>
<svg style="left:94.09px;top:435.504px" width="9.2" height="7.7" viewBox="0 0 8.6 7.3" preserveAspectRatio="none"><path d="M0 1.2H4.2L5 0H8.6V7.3H0Z" fill="#dcb67a"/><path d="M5.2 0.9H8V1.5H4.9Z" fill="#efdcb8"/></svg>
<span class="t" id="t40" style="left:94.26px;top:452.921px;font-size:12.5px;color:#262626;font-family:'Liberation Sans', sans-serif;transform:scaleX(0.9386);transform-origin:0 0;">Columns</span>
<svg style="left:68.46px;top:454.271px" width="9" height="9" viewBox="0 0 9 9" preserveAspectRatio="none"><defs><linearGradient id="eg24" x1="0" y1="0" x2="0" y2="1"><stop offset="0" stop-color="#ffffff"/><stop offset="1" stop-color="#e2e4ea"/></linearGradient></defs><rect x="0.5" y="0.5" width="8" height="8" fill="url(#eg24)" stroke="#a2a5ad" stroke-width="1"/><rect x="2" y="4" width="5" height="1" fill="#5d78bd"/></svg>
<svg style="left:81.36px;top:454.171px" width="9.2" height="7.7" viewBox="0 0 8.6 7.3" preserveAspectRatio="none"><path d="M0 1.2H4.2L5 0H8.6V7.3H0Z" fill="#dcb67a"/><path d="M5.2 0.9H8V1.5H4.9Z" fill="#efdcb8"/></svg>
<span class="t" id="t41" style="left:106.99px;top:471.587px;font-size:12.5px;color:#262626;font-family:'Liberation Sans', sans-serif;transform:scaleX(0.9340);transform-origin:0 0;">Id (PK, int, not null)</span>
<svg style="left:93.89px;top:474.737px" width="7.8" height="4.6" viewBox="0 0 7.8 4.6" preserveAspectRatio="none"><circle cx="5.6" cy="2.3" r="2.2" fill="#424242"/><circle cx="6.3" cy="2.3" r="0.7" fill="#fff"/><path d="M0 2.3H4M0.8 2.3V4M2.2 2.3V3.6" stroke="#424242" stroke-width="1.1" fill="none"/></svg>
<span class="t" id="t42" style="left:106.99px;top:490.254px;font-size:12.5px;color:#262626;font-family:'Liberation Sans', sans-serif;transform:scaleX(0.9432);transform-origin:0 0;">Date (datetime2(7), not null)</span>
<svg style="left:95.19px;top:490.804px" width="5.6" height="10" viewBox="0 0 5.6 10" preserveAspectRatio="none"><rect x="0.5" y="0.5" width="4.6" height="9" fill="#f4f4f4" stroke="#4a4a4a" stroke-width="0.9"/><path d="M0.5 1.6H5.1" stroke="#4a4a4a" stroke-width="1.2"/><path d="M0.5 4.2H5.1M0.5 6.8H5.1" stroke="#5a5a5a" stroke-width="0.8"/></svg>
<span class="t" id="t43" style="left:106.99px;top:508.921px;font-size:12.5px;color:#262626;font-family:'Liberation Sans', sans-serif;transform:scaleX(0.9409);transform-origin:0 0;">TemperatureC (int, not null)</span>
<svg style="left:95.19px;top:509.471px" width="5.6" height="10" viewBox="0 0 5.6 10" preserveAspectRatio="none"><rect x="0.5" y="0.5" width="4.6" height="9" fill="#f4f4f4" stroke="#4a4a4a" stroke-width="0.9"/><path d="M0.5 1.6H5.1" stroke="#4a4a4a" stroke-width="1.2"/><path d="M0.5 4.2H5.1M0.5 6.8H5.1" stroke="#5a5a5a" stroke-width="0.8"/></svg>
<span class="t" id="t44" style="left:106.99px;top:527.588px;font-size:12.5px;color:#262626;font-family:'Liberation Sans', sans-serif;transform:scaleX(0.9330);transform-origin:0 0;">Summary (nvarchar(250), not null)</span>
<svg style="left:95.19px;top:528.138px" width="5.6" height="10" viewBox="0 0 5.6 10" preserveAspectRatio="none"><rect x="0.5" y="0.5" width="4.6" height="9" fill="#f4f4f4" stroke="#4a4a4a" stroke-width="0.9"/><path d="M0.5 1.6H5.1" stroke="#4a4a4a" stroke-width="1.2"/><path d="M0.5 4.2H5.1M0.5 6.8H5.1" stroke="#5a5a5a" stroke-width="0.8"/></svg>
<span class="t" id="t45" style="left:106.99px;top:546.254px;font-size:12.5px;color:#262626;font-family:'Liberation Sans', sans-serif;transform:scaleX(0.9428);transform-origin:0 0;">CreatedAt (datetime2(7), not null)</span>
<svg style="left:95.19px;top:546.804px" width="5.6" height="10" viewBox="0 0 5.6 10" preserveAspectRatio="none"><rect x="0.5" y="0.5" width="4.6" height="9" fill="#f4f4f4" stroke="#4a4a4a" stroke-width="0.9"/><path d="M0.5 1.6H5.1" stroke="#4a4a4a" stroke-width="1.2"/><path d="M0.5 4.2H5.1M0.5 6.8H5.1" stroke="#5a5a5a" stroke-width="0.8"/></svg>
<span class="t" id="t46" style="left:106.99px;top:564.921px;font-size:12.5px;color:#262626;font-family:'Liberation Sans', sans-serif;transform:scaleX(0.9036);transform-origin:0 0;">CreatedBy (nvarchar(max), null)</span>
<svg style="left:95.19px;top:565.471px" width="5.6" height="10" viewBox="0 0 5.6 10" preserveAspectRatio="none"><rect x="0.5" y="0.5" width="4.6" height="9" fill="#f4f4f4" stroke="#4a4a4a" stroke-width="0.9"/><path d="M0.5 1.6H5.1" stroke="#4a4a4a" stroke-width="1.2"/><path d="M0.5 4.2H5.1M0.5 6.8H5.1" stroke="#5a5a5a" stroke-width="0.8"/></svg>
<span class="t" id="t47" style="left:106.99px;top:583.588px;font-size:12.5px;color:#262626;font-family:'Liberation Sans', sans-serif;transform:scaleX(0.9462);transform-origin:0 0;">LastModified (datetime2(7), null)</span>
<svg style="left:95.19px;top:584.138px" width="5.6" height="10" viewBox="0 0 5.6 10" preserveAspectRatio="none"><rect x="0.5" y="0.5" width="4.6" height="9" fill="#f4f4f4" stroke="#4a4a4a" stroke-width="0.9"/><path d="M0.5 1.6H5.1" stroke="#4a4a4a" stroke-width="1.2"/><path d="M0.5 4.2H5.1M0.5 6.8H5.1" stroke="#5a5a5a" stroke-width="0.8"/></svg>
<span class="t" id="t48" style="left:106.99px;top:602.254px;font-size:12.5px;color:#262626;font-family:'Liberation Sans', sans-serif;transform:scaleX(0.9244);transform-origin:0 0;">LastModifiedBy (nvarchar(max), null)</span>
<svg style="left:95.19px;top:602.804px" width="5.6" height="10" viewBox="0 0 5.6 10" preserveAspectRatio="none"><rect x="0.5" y="0.5" width="4.6" height="9" fill="#f4f4f4" stroke="#4a4a4a" stroke-width="0.9"/><path d="M0.5 1.6H5.1" stroke="#4a4a4a" stroke-width="1.2"/><path d="M0.5 4.2H5.1M0.5 6.8H5.1" stroke="#5a5a5a" stroke-width="0.8"/></svg>
<span class="t" id="t49" style="left:106.99px;top:620.921px;font-size:12.5px;color:#262626;font-family:'Liberation Sans', sans-serif;transform:scaleX(0.9160);transform-origin:0 0;">Location (nvarchar(max), null)</span>
<svg style="left:95.19px;top:621.471px" width="5.6" height="10" viewBox="0 0 5.6 10" preserveAspectRatio="none"><rect x="0.5" y="0.5" width="4.6" height="9" fill="#f4f4f4" stroke="#4a4a4a" stroke-width="0.9"/><path d="M0.5 1.6H5.1" stroke="#4a4a4a" stroke-width="1.2"/><path d="M0.5 4.2H5.1M0.5 6.8H5.1" stroke="#5a5a5a" stroke-width="0.8"/></svg>
<span class="t" id="t50" style="left:106.99px;top:639.588px;font-size:12.5px;color:#262626;font-family:'Liberation Sans', sans-serif;transform:scaleX(0.9516);transform-origin:0 0;">ValidFrom (datetime2(7), not null)</span>
<svg style="left:95.19px;top:640.138px" width="5.6" height="10" viewBox="0 0 5.6 10" preserveAspectRatio="none"><rect x="0.5" y="0.5" width="4.6" height="9" fill="#f4f4f4" stroke="#4a4a4a" stroke-width="0.9"/><path d="M0.5 1.6H5.1" stroke="#4a4a4a" stroke-width="1.2"/><path d="M0.5 4.2H5.1M0.5 6.8H5.1" stroke="#5a5a5a" stroke-width="0.8"/></svg>
<span class="t" id="t51" style="left:106.99px;top:658.254px;font-size:12.5px;color:#262626;font-family:'Liberation Sans', sans-serif;transform:scaleX(0.9557);transform-origin:0 0;">ValidTo (datetime2(7), not null)</span>
<svg style="left:95.19px;top:658.804px" width="5.6" height="10" viewBox="0 0 5.6 10" preserveAspectRatio="none"><rect x="0.5" y="0.5" width="4.6" height="9" fill="#f4f4f4" stroke="#4a4a4a" stroke-width="0.9"/><path d="M0.5 1.6H5.1" stroke="#4a4a4a" stroke-width="1.2"/><path d="M0.5 4.2H5.1M0.5 6.8H5.1" stroke="#5a5a5a" stroke-width="0.8"/></svg>
<span class="t" id="t52" style="left:94.26px;top:676.921px;font-size:12.5px;color:#262626;font-family:'Liberation Sans', sans-serif;transform:scaleX(0.8598);transform-origin:0 0;">Keys</span>
<svg style="left:68.46px;top:678.271px" width="9" height="9" viewBox="0 0 9 9" preserveAspectRatio="none"><defs><linearGradient id="eg36" x1="0" y1="0" x2="0" y2="1"><stop offset="0" stop-color="#ffffff"/><stop offset="1" stop-color="#e2e4ea"/></linearGradient></defs><rect x="0.5" y="0.5" width="8" height="8" fill="url(#eg36)" stroke="#a2a5ad" stroke-width="1"/><rect x="2" y="4" width="5" height="1" fill="#5d78bd"/><rect x="4" y="2" width="1" height="5" fill="#5d78bd"/></svg>
<svg style="left:81.36px;top:678.171px" width="9.2" height="7.7" viewBox="0 0 8.6 7.3" preserveAspectRatio="none"><path d="M0 1.2H4.2L5 0H8.6V7.3H0Z" fill="#dcb67a"/><path d="M5.2 0.9H8V1.5H4.9Z" fill="#efdcb8"/></svg>
<span class="t" id="t53" style="left:94.26px;top:695.588px;font-size:12.5px;color:#262626;font-family:'Liberation Sans', sans-serif;transform:scaleX(0.9362);transform-origin:0 0;">Constraints</span>
<svg style="left:68.46px;top:696.938px" width="9" height="9" viewBox="0 0 9 9" preserveAspectRatio="none"><defs><linearGradient id="eg37" x1="0" y1="0" x2="0" y2="1"><stop offset="0" stop-color="#ffffff"/><stop offset="1" stop-color="#e2e4ea"/></linearGradient></defs><rect x="0.5" y="0.5" width="8" height="8" fill="url(#eg37)" stroke="#a2a5ad" stroke-width="1"/><rect x="2" y="4" width="5" height="1" fill="#5d78bd"/><rect x="4" y="2" width="1" height="5" fill="#5d78bd"/></svg>
<svg style="left:81.36px;top:696.838px" width="9.2" height="7.7" viewBox="0 0 8.6 7.3" preserveAspectRatio="none"><path d="M0 1.2H4.2L5 0H8.6V7.3H0Z" fill="#dcb67a"/><path d="M5.2 0.9H8V1.5H4.9Z" fill="#efdcb8"/></svg>
<span class="t" id="t54" style="left:94.26px;top:714.255px;font-size:12.5px;color:#262626;font-family:'Liberation Sans', sans-serif;transform:scaleX(0.9363);transform-origin:0 0;">Triggers</span>
<svg style="left:68.46px;top:715.605px" width="9" height="9" viewBox="0 0 9 9" preserveAspectRatio="none"><defs><linearGradient id="eg38" x1="0" y1="0" x2="0" y2="1"><stop offset="0" stop-color="#ffffff"/><stop offset="1" stop-color="#e2e4ea"/></linearGradient></defs><rect x="0.5" y="0.5" width="8" height="8" fill="url(#eg38)" stroke="#a2a5ad" stroke-width="1"/><rect x="2" y="4" width="5" height="1" fill="#5d78bd"/><rect x="4" y="2" width="1" height="5" fill="#5d78bd"/></svg>
<svg style="left:81.36px;top:715.505px" width="9.2" height="7.7" viewBox="0 0 8.6 7.3" preserveAspectRatio="none"><path d="M0 1.2H4.2L5 0H8.6V7.3H0Z" fill="#dcb67a"/><path d="M5.2 0.9H8V1.5H4.9Z" fill="#efdcb8"/></svg>
<span class="t" id="t55" style="left:94.26px;top:732.921px;font-size:12.5px;color:#262626;font-family:'Liberation Sans', sans-serif;transform:scaleX(0.8999);transform-origin:0 0;">Indexes</span>
<svg style="left:68.46px;top:734.271px" width="9" height="9" viewBox="0 0 9 9" preserveAspectRatio="none"><defs><linearGradient id="eg39" x1="0" y1="0" x2="0" y2="1"><stop offset="0" stop-color="#ffffff"/><stop offset="1" stop-color="#e2e4ea"/></linearGradient></defs><rect x="0.5" y="0.5" width="8" height="8" fill="url(#eg39)" stroke="#a2a5ad" stroke-width="1"/><rect x="2" y="4" width="5" height="1" fill="#5d78bd"/><rect x="4" y="2" width="1" height="5" fill="#5d78bd"/></svg>
<svg style="left:81.36px;top:734.171px" width="9.2" height="7.7" viewBox="0 0 8.6 7.3" preserveAspectRatio="none"><path d="M0 1.2H4.2L5 0H8.6V7.3H0Z" fill="#dcb67a"/><path d="M5.2 0.9H8V1.5H4.9Z" fill="#efdcb8"/></svg>
<span class="t" id="t56" style="left:94.26px;top:751.588px;font-size:12.5px;color:#262626;font-family:'Liberation Sans', sans-serif;transform:scaleX(0.9097);transform-origin:0 0;">Statistics</span>
<svg style="left:68.46px;top:752.938px" width="9" height="9" viewBox="0 0 9 9" preserveAspectRatio="none"><defs><linearGradient id="eg40" x1="0" y1="0" x2="0" y2="1"><stop offset="0" stop-color="#ffffff"/><stop offset="1" stop-color="#e2e4ea"/></linearGradient></defs><rect x="0.5" y="0.5" width="8" height="8" fill="url(#eg40)" stroke="#a2a5ad" stroke-width="1"/><rect x="2" y="4" width="5" height="1" fill="#5d78bd"/><rect x="4" y="2" width="1" height="5" fill="#5d78bd"/></svg>
<svg style="left:81.36px;top:752.838px" width="9.2" height="7.7" viewBox="0 0 8.6 7.3" preserveAspectRatio="none"><path d="M0 1.2H4.2L5 0H8.6V7.3H0Z" fill="#dcb67a"/><path d="M5.2 0.9H8V1.5H4.9Z" fill="#efdcb8"/></svg>
<span class="t" id="t57" style="left:81.53px;top:770.255px;font-size:12.5px;color:#262626;font-family:'Liberation Sans', sans-serif;transform:scaleX(0.9558);transform-origin:0 0;">Dropped Ledger Tables</span>
<svg style="left:55.73px;top:771.605px" width="9" height="9" viewBox="0 0 9 9" preserveAspectRatio="none"><defs><linearGradient id="eg41" x1="0" y1="0" x2="0" y2="1"><stop offset="0" stop-color="#ffffff"/><stop offset="1" stop-color="#e2e4ea"/></linearGradient></defs><rect x="0.5" y="0.5" width="8" height="8" fill="url(#eg41)" stroke="#a2a5ad" stroke-width="1"/><rect x="2" y="4" width="5" height="1" fill="#5d78bd"/><rect x="4" y="2" width="1" height="5" fill="#5d78bd"/></svg>
<svg style="left:68.63px;top:771.505px" width="9.2" height="7.7" viewBox="0 0 8.6 7.3" preserveAspectRatio="none"><path d="M0 1.2H4.2L5 0H8.6V7.3H0Z" fill="#dcb67a"/><path d="M5.2 0.9H8V1.5H4.9Z" fill="#efdcb8"/></svg>
<span class="t" id="t58" style="left:68.8px;top:788.921px;font-size:12.5px;color:#262626;font-family:'Liberation Sans', sans-serif;transform:scaleX(0.8875);transform-origin:0 0;">Views</span>
<svg style="left:43px;top:790.271px" width="9" height="9" viewBox="0 0 9 9" preserveAspectRatio="none"><defs><linearGradient id="eg42" x1="0" y1="0" x2="0" y2="1"><stop offset="0" stop-color="#ffffff"/><stop offset="1" stop-color="#e2e4ea"/></linearGradient></defs><rect x="0.5" y="0.5" width="8" height="8" fill="url(#eg42)" stroke="#a2a5ad" stroke-width="1"/><rect x="2" y="4" width="5" height="1" fill="#5d78bd"/><rect x="4" y="2" width="1" height="5" fill="#5d78bd"/></svg>
<svg style="left:55.9px;top:790.171px" width="9.2" height="7.7" viewBox="0 0 8.6 7.3" preserveAspectRatio="none"><path d="M0 1.2H4.2L5 0H8.6V7.3H0Z" fill="#dcb67a"/><path d="M5.2 0.9H8V1.5H4.9Z" fill="#efdcb8"/></svg>
<span class="t" id="t59" style="left:68.8px;top:807.588px;font-size:12.5px;color:#262626;font-family:'Liberation Sans', sans-serif;transform:scaleX(0.8911);transform-origin:0 0;">External Resources</span>
<svg style="left:43px;top:808.938px" width="9" height="9" viewBox="0 0 9 9" preserveAspectRatio="none"><defs><linearGradient id="eg43" x1="0" y1="0" x2="0" y2="1"><stop offset="0" stop-color="#ffffff"/><stop offset="1" stop-color="#e2e4ea"/></linearGradient></defs><rect x="0.5" y="0.5" width="8" height="8" fill="url(#eg43)" stroke="#a2a5ad" stroke-width="1"/><rect x="2" y="4" width="5" height="1" fill="#5d78bd"/><rect x="4" y="2" width="1" height="5" fill="#5d78bd"/></svg>
<svg style="left:55.9px;top:808.838px" width="9.2" height="7.7" viewBox="0 0 8.6 7.3" preserveAspectRatio="none"><path d="M0 1.2H4.2L5 0H8.6V7.3H0Z" fill="#dcb67a"/><path d="M5.2 0.9H8V1.5H4.9Z" fill="#efdcb8"/></svg>
<span class="t" id="t60" style="left:68.8px;top:826.255px;font-size:12.5px;color:#262626;font-family:'Liberation Sans', sans-serif;transform:scaleX(0.9253);transform-origin:0 0;">Synonyms</span>
<svg style="left:43px;top:827.605px" width="9" height="9" viewBox="0 0 9 9" preserveAspectRatio="none"><defs><linearGradient id="eg44" x1="0" y1="0" x2="0" y2="1"><stop offset="0" stop-color="#ffffff"/><stop offset="1" stop-color="#e2e4ea"/></linearGradient></defs><rect x="0.5" y="0.5" width="8" height="8" fill="url(#eg44)" stroke="#a2a5ad" stroke-width="1"/><rect x="2" y="4" width="5" height="1" fill="#5d78bd"/><rect x="4" y="2" width="1" height="5" fill="#5d78bd"/></svg>
<svg style="left:55.9px;top:827.505px" width="9.2" height="7.7" viewBox="0 0 8.6 7.3" preserveAspectRatio="none"><path d="M0 1.2H4.2L5 0H8.6V7.3H0Z" fill="#dcb67a"/><path d="M5.2 0.9H8V1.5H4.9Z" fill="#efdcb8"/></svg>
</div>
<div style="position:absolute;left:353px;top:116px;width:268.6px;height:22px;background:#fff29d;"></div>
<div style="position:absolute;left:353px;top:136px;width:1535.2px;height:2.4px;background:#fff29d;"></div>
<span class="t" id="t61" style="left:357.4px;top:121.55px;font-size:12.5px;color:#262626;font-family:'Liberation Sans', sans-serif;transform:scaleX(0.9025);transform-origin:0 0;">SQLQuery13.sql - (l...SRV22.Test (sa (54))*</span>
<div style="position:absolute;left:353px;top:138.4px;width:1535px;height:863.6px;background:#9aa7c7;"></div>
<div style="position:absolute;left:354.7px;top:138.4px;width:1532.5px;height:862.6px;background:#e8e8ec;"></div>
<div style="position:absolute;left:354.7px;top:138.4px;width:1513.6px;height:607.6px;background:#ffffff;"></div>
<div style="position:absolute;left:354.7px;top:138.4px;width:17.3px;height:607.6px;background:#e6e7e8;"></div>
<div style="position:absolute;left:421.2px;top:138.4px;width:4.7px;height:524.6px;background:#ffee62;"></div>
<div style="position:absolute;left:437px;top:138.4px;width:1431.2px;height:21px;box-sizing:border-box;border:2.2px solid #ffff00;"></div>
<div class="cl" style="left:380px;top:140.4px;width:38.6px;text-align:right;color:#2b91af;">1</div>
<div class="cl" style="left:380px;top:161.4px;width:38.6px;text-align:right;color:#2b91af;">2</div>
<div class="cl" style="left:439.3px;top:161.4px;"><span style="color:#008000">-- Existing Table</span></div>
<div class="cl" style="left:380px;top:182.4px;width:38.6px;text-align:right;color:#2b91af;">3</div>
<div class="cl" style="left:439.3px;top:182.4px;"><span style="color:#0000ff">CREATE TABLE</span><span style="color:#000000"> [dbo]</span><span style="color:#808080">.</span><span style="color:#000000">[WeatherForecasts]</span></div>
<div class="cl" style="left:380px;top:203.4px;width:38.6px;text-align:right;color:#2b91af;">4</div>
<div class="cl" style="left:439.3px;top:203.4px;"><span style="color:#808080">(</span></div>
<div class="cl" style="left:380px;top:224.4px;width:38.6px;text-align:right;color:#2b91af;">5</div>
<div class="cl" style="left:439.3px;top:224.4px;"><span style="color:#000000">    [Id] </span><span style="color:#0000ff">INT</span><span style="color:#808080"> NOT NULL</span><span style="color:#0000ff"> PRIMARY KEY CLUSTERED</span><span style="color:#808080">,</span></div>
<div class="cl" style="left:380px;top:245.4px;width:38.6px;text-align:right;color:#2b91af;">6</div>
<div class="cl" style="left:439.3px;top:245.4px;"><span style="color:#000000">    [Date] [datetime2]</span><span style="color:#808080">(</span><span style="color:#000000">7</span><span style="color:#808080">) NOT NULL,</span></div>
<div class="cl" style="left:380px;top:266.4px;width:38.6px;text-align:right;color:#2b91af;">7</div>
<div class="cl" style="left:439.3px;top:266.4px;"><span style="color:#000000">    [TemperatureC] [int]</span><span style="color:#808080"> NOT NULL,</span></div>
<div class="cl" style="left:380px;top:287.4px;width:38.6px;text-align:right;color:#2b91af;">8</div>
<div class="cl" style="left:439.3px;top:287.4px;"><span style="color:#000000">    [Summary] [nvarchar]</span><span style="color:#808080">(</span><span style="color:#000000">250</span><span style="color:#808080">) NOT NULL,</span></div>
<div class="cl" style="left:380px;top:308.4px;width:38.6px;text-align:right;color:#2b91af;">9</div>
<div class="cl" style="left:439.3px;top:308.4px;"><span style="color:#000000">    [CreatedAt] [datetime2]</span><span style="color:#808080">(</span><span style="color:#000000">7</span><span style="color:#808080">) NOT NULL,</span></div>
<div class="cl" style="left:380px;top:329.4px;width:38.6px;text-align:right;color:#2b91af;">10</div>
<div class="cl" style="left:439.3px;top:329.4px;"><span style="color:#000000">    [CreatedBy] [nvarchar]</span><span style="color:#808080">(</span><span style="color:#ff00ff">max</span><span style="color:#808080">) NULL,</span></div>
<div class="cl" style="left:380px;top:350.4px;width:38.6px;text-align:right;color:#2b91af;">11</div>
<div class="cl" style="left:439.3px;top:350.4px;"><span style="color:#000000">    [LastModified] [datetime2]</span><span style="color:#808080">(</span><span style="color:#000000">7</span><span style="color:#808080">) NULL,</span></div>
<div class="cl" style="left:380px;top:371.4px;width:38.6px;text-align:right;color:#2b91af;">12</div>
<div class="cl" style="left:439.3px;top:371.4px;"><span style="color:#000000">    [LastModifiedBy] [nvarchar]</span><span style="color:#808080">(</span><span style="color:#ff00ff">max</span><span style="color:#808080">) NULL,</span></div>
<div class="cl" style="left:380px;top:392.4px;width:38.6px;text-align:right;color:#2b91af;">13</div>
<div class="cl" style="left:439.3px;top:392.4px;"><span style="color:#000000">    [Location] [nvarchar]</span><span style="color:#808080">(</span><span style="color:#ff00ff">max</span><span style="color:#808080">) NULL</span></div>
<div class="cl" style="left:380px;top:413.4px;width:38.6px;text-align:right;color:#2b91af;">14</div>
<div class="cl" style="left:439.3px;top:413.4px;"><span style="color:#808080">)</span></div>
<div class="cl" style="left:380px;top:434.4px;width:38.6px;text-align:right;color:#2b91af;">15</div>
<div class="cl" style="left:439.3px;top:434.4px;"><span style="color:#0000ff">GO</span></div>
<div class="cl" style="left:380px;top:455.4px;width:38.6px;text-align:right;color:#2b91af;">16</div>
<div class="cl" style="left:439.3px;top:455.4px;"><span style="color:#008000">-- Add columns</span></div>
<div class="cl" style="left:380px;top:476.4px;width:38.6px;text-align:right;color:#2b91af;">17</div>
<div class="cl" style="left:439.3px;top:476.4px;"><span style="color:#0000ff">ALTER TABLE</span><span style="color:#000000"> WeatherForecasts </span><span style="color:#0000ff">ADD</span><span style="color:#000000">  [ValidFrom] </span><span style="color:#0000ff">datetime2</span><span style="color:#808080"> NOT NULL;</span></div>
<div class="cl" style="left:380px;top:497.4px;width:38.6px;text-align:right;color:#2b91af;">18</div>
<div class="cl" style="left:439.3px;top:497.4px;"><span style="color:#0000ff">ALTER TABLE</span><span style="color:#000000"> WeatherForecasts </span><span style="color:#0000ff">ADD</span><span style="color:#000000">  [ValidTo] </span><span style="color:#0000ff">datetime2</span><span style="color:#808080"> NOT NULL;</span></div>
<div class="cl" style="left:380px;top:518.4px;width:38.6px;text-align:right;color:#2b91af;">19</div>
<div class="cl" style="left:439.3px;top:518.4px;"><span style="color:#0000ff">GO</span></div>
<div class="cl" style="left:380px;top:539.4px;width:38.6px;text-align:right;color:#2b91af;">20</div>
<div class="cl" style="left:439.3px;top:539.4px;"><span style="color:#0000ff">ALTER TABLE</span><span style="color:#000000"> WeatherForecasts</span></div>
<div class="cl" style="left:380px;top:560.4px;width:38.6px;text-align:right;color:#2b91af;">21</div>
<div class="cl" style="left:439.3px;top:560.4px;"><span style="color:#0000ff">ADD PERIOD FOR SYSTEM_TIME</span><span style="color:#808080"> (</span><span style="color:#000000">[ValidFrom]</span><span style="color:#808080">,</span><span style="color:#000000"> [ValidTo]</span><span style="color:#808080">)</span></div>
<div class="cl" style="left:380px;top:581.4px;width:38.6px;text-align:right;color:#2b91af;">22</div>
<div class="cl" style="left:439.3px;top:581.4px;"><span style="color:#0000ff">ALTER TABLE</span><span style="color:#000000"> WeatherForecasts</span></div>
<div class="cl" style="left:380px;top:602.4px;width:38.6px;text-align:right;color:#2b91af;">23</div>
<div class="cl" style="left:439.3px;top:602.4px;"><span style="color:#0000ff">    SET</span><span style="color:#808080"> (</span><span style="color:#0000ff">SYSTEM_VERSIONING</span><span style="color:#808080"> = </span><span style="color:#0000ff">ON</span><span style="color:#808080"> (</span><span style="color:#000000">HISTORY_TABLE</span><span style="color:#808080"> = </span><span style="color:#000000">dbo</span><span style="color:#808080">.</span><span style="color:#000000">WeatherForecastsHistory</span><span style="color:#808080">,</span><span style="color:#000000"> DATA_CONSISTENCY_CHECK</span><span style="color:#808080"> = </span><span style="color:#0000ff">ON</span><span style="color:#808080">));</span></div>
<div class="cl" style="left:380px;top:623.4px;width:38.6px;text-align:right;color:#2b91af;">24</div>
<div class="cl" style="left:439.3px;top:623.4px;"><span style="color:#0000ff">GO</span></div>
<div class="cl" style="left:380px;top:644.4px;width:38.6px;text-align:right;color:#2b91af;">25</div>
<style>.cl{position:absolute;white-space:pre;font-family:"Liberation Mono",monospace;font-size:16px;line-height:21px;height:21px;letter-spacing:-0.278px;}</style>
<div style="position:absolute;left:429.2px;top:187.2px;width:8.4px;height:8.4px;box-sizing:border-box;border:1px solid #b0b0b0;background:#fcfcfc;"></div><div style="position:absolute;left:431.2px;top:190.8px;width:4.4px;height:1.2px;background:#707070;"></div><div style="position:absolute;left:433.1px;top:195.6px;width:1.1px;height:236.3px;background:#a8a8a8;"></div><div style="position:absolute;left:433.1px;top:431.9px;width:4.6px;height:1px;background:#a8a8a8;"></div>
<div style="position:absolute;left:429.2px;top:481.2px;width:8.4px;height:8.4px;box-sizing:border-box;border:1px solid #b0b0b0;background:#fcfcfc;"></div><div style="position:absolute;left:431.2px;top:484.8px;width:4.4px;height:1.2px;background:#707070;"></div><div style="position:absolute;left:433.1px;top:489.6px;width:1.1px;height:26.3px;background:#a8a8a8;"></div><div style="position:absolute;left:433.1px;top:515.9px;width:4.6px;height:1px;background:#a8a8a8;"></div>
<div style="position:absolute;left:429.2px;top:544.2px;width:8.4px;height:8.4px;box-sizing:border-box;border:1px solid #b0b0b0;background:#fcfcfc;"></div><div style="position:absolute;left:431.2px;top:547.8px;width:4.4px;height:1.2px;background:#707070;"></div><div style="position:absolute;left:433.1px;top:552.6px;width:1.1px;height:26.3px;background:#a8a8a8;"></div><div style="position:absolute;left:433.1px;top:578.9px;width:4.6px;height:1px;background:#a8a8a8;"></div><div style="position:absolute;left:433.1px;top:579.9px;width:1.1px;height:6.6px;background:#c8c8c8;"></div>
<div style="position:absolute;left:429.2px;top:586.2px;width:8.4px;height:8.4px;box-sizing:border-box;border:1px solid #b0b0b0;background:#fcfcfc;"></div><div style="position:absolute;left:431.2px;top:589.8px;width:4.4px;height:1.2px;background:#707070;"></div><div style="position:absolute;left:433.1px;top:594.6px;width:1.1px;height:26.3px;background:#a8a8a8;"></div><div style="position:absolute;left:433.1px;top:620.9px;width:4.6px;height:1px;background:#a8a8a8;"></div>
<div style="position:absolute;left:1868.3px;top:138.4px;width:18.9px;height:607.6px;background:#e8e8ec;"></div>
<div style="position:absolute;left:1868.3px;top:138.4px;width:18.9px;height:16.3px;background:#e3e9fb;"></div>
<svg style="left:1872.8px;top:140px" width="11.2" height="13.4" viewBox="0 0 11.2 13.4"><path d="M0 5.6H11.2M0 7.8H11.2" stroke="#1e1e1e" stroke-width="0.9"/><path d="M5.6 0.6V12.8" stroke="#1e1e1e" stroke-width="0.9"/><path d="M3.6 2.6L5.6 0.2L7.6 2.6ZM3.6 10.8L5.6 13.2L7.6 10.8Z" fill="#1e1e1e"/></svg>
<svg style="left:1873px;top:161.8px" width="9.2" height="4.6" viewBox="0 0 9.2 4.6" preserveAspectRatio="none"><path d="M0 4.6L4.6 0L9.2 4.6Z" fill="#868999"/></svg>
<div style="position:absolute;left:1868px;top:171.3px;width:19.2px;height:2px;background:#0000cd;"></div>
<div style="position:absolute;left:1872.2px;top:173.3px;width:10.8px;height:292.8px;background:#c2c3c9;"></div>
<div style="position:absolute;left:1869.3px;top:173.3px;width:4.4px;height:258.4px;background:#ffee62;"></div>
<svg style="left:1873px;top:734.6px" width="9.2" height="5" viewBox="0 0 9.2 5" preserveAspectRatio="none"><path d="M0 0H9.2L4.6 5Z" fill="#868999"/></svg>
<div style="position:absolute;left:354.7px;top:746px;width:1532.5px;height:16.7px;background:#e8e8ec;"></div>
<div style="position:absolute;left:354.7px;top:746.3px;width:60px;height:16.2px;background:#fcfcfc;border:1px solid #c5cce0;box-sizing:border-box;"></div>
<span class="t" id="t62" style="left:357.2px;top:750.39px;font-size:11.5px;color:#262626;font-family:'Liberation Sans', sans-serif;transform:scaleX(0.9752);transform-origin:0 0;">100 %</span>
<svg style="left:406px;top:754px" width="6" height="3" viewBox="0 0 6 3.4" preserveAspectRatio="none"><path d="M0 0H6L3 3.4Z" fill="#1b2a47"/></svg>
<svg style="left:420.6px;top:750.2px" width="5.4" height="8.6" viewBox="0 0 5.4 8.6" preserveAspectRatio="none"><path d="M5.4 0V8.6L0 4.3Z" fill="#c8cad6"/></svg>
<svg style="left:1857px;top:750.2px" width="5" height="8.6" viewBox="0 0 5 8.6" preserveAspectRatio="none"><path d="M0 0V8.6L5 4.3Z" fill="#c8cad6"/></svg>
<div style="position:absolute;left:354.7px;top:762.7px;width:1532.5px;height:22px;background:#f0f0f0;"></div>
<div style="position:absolute;left:355px;top:766.7px;width:73px;height:18px;background:#f8f8f8;"></div>
<svg style="left:360.4px;top:769.8px" width="9.8" height="9.4" viewBox="0 0 9.8 9.4"><rect x="4.6" y="0.2" width="5" height="6.4" fill="#424242"/><rect x="5.8" y="1" width="2.4" height="1" fill="#bbb"/><rect x="0.3" y="2.8" width="4.6" height="6.3" fill="#c8c8c8" stroke="#555" stroke-width="0.7"/><path d="M1.2 4.6H3.8M1.2 6H3.8M1.2 7.4H3" stroke="#555" stroke-width="0.6"/></svg>
<span class="t" id="t63" style="left:375px;top:769.12px;font-size:12px;color:#262626;font-family:'Liberation Sans', sans-serif;transform:scaleX(0.8829);transform-origin:0 0;">Messages</span>
<div style="position:absolute;left:354.7px;top:785px;width:1512.5px;height:176px;background:#ffffff;"></div>
<span class="t" id="t64" style="left:378.2px;top:787.36px;font-size:11px;color:#333333;font-family:'Liberation Mono', monospace;transform:scaleX(1.0036);transform-origin:0 0;">Commands completed successfully.</span>
<span class="t" id="t65" style="left:378.2px;top:817.36px;font-size:11px;color:#333333;font-family:'Liberation Mono', monospace;transform:scaleX(1.0083);transform-origin:0 0;">Completion time: 2023-05-09T14:18:30.5096012+06:00</span>
<div style="position:absolute;left:1867.2px;top:785px;width:17px;height:176px;background:#e8e8ec;"></div>
<div style="position:absolute;left:1884.2px;top:785px;width:3px;height:194px;background:#f0f0f0;"></div>
<svg style="left:1870.8px;top:791.2px" width="9.5" height="5.4" viewBox="0 0 9 4.6" preserveAspectRatio="none"><path d="M0 4.6L4.5 0L9 4.6Z" fill="#868999"/></svg>
<div style="position:absolute;left:1871.3px;top:802.6px;width:8.4px;height:105px;background:#c2c3c9;"></div>
<svg style="left:1870.8px;top:949.6px" width="9.5" height="5.2" viewBox="0 0 9 4.8" preserveAspectRatio="none"><path d="M0 0H9L4.5 4.8Z" fill="#868999"/></svg>
<div style="position:absolute;left:354.7px;top:961px;width:1529.5px;height:17.4px;background:#e8e8ec;"></div>
<div style="position:absolute;left:357.4px;top:961px;width:60px;height:16.6px;background:#fcfcfc;border:1px solid #c5cce0;box-sizing:border-box;"></div>
<span class="t" id="t66" style="left:359.8px;top:965.19px;font-size:11.5px;color:#262626;font-family:'Liberation Sans', sans-serif;transform:scaleX(0.9721);transform-origin:0 0;">100 %</span>
<svg style="left:408.6px;top:968.5px" width="6" height="3" viewBox="0 0 6 3.4" preserveAspectRatio="none"><path d="M0 0H6L3 3.4Z" fill="#1b2a47"/></svg>
<svg style="left:423.4px;top:965px" width="5.4" height="9" viewBox="0 0 5.4 9" preserveAspectRatio="none"><path d="M5.4 0V9L0 4.5Z" fill="#c8cad6"/></svg>
<svg style="left:1856px;top:965px" width="5" height="9" viewBox="0 0 5 9" preserveAspectRatio="none"><path d="M0 0V9L5 4.5Z" fill="#c8cad6"/></svg>
<div style="position:absolute;left:354.7px;top:978.4px;width:1532.5px;height:2.6px;background:#f5f5f5;"></div>
<div style="position:absolute;left:354.7px;top:981px;width:1532.5px;height:20px;background:#f0e68c;"></div>
<svg style="left:357.8px;top:985.8px" width="9.8" height="9.8" viewBox="0 0 10 10"><circle cx="5" cy="5" r="5" fill="#2e9e3c"/><path d="M2.6 5.2L4.4 7.2L7.4 2.8" fill="none" stroke="#fff" stroke-width="1.5"/></svg>
<span class="t" id="t67" style="left:371.6px;top:985.55px;font-size:12.5px;color:#262626;font-family:'Liberation Sans', sans-serif;transform:scaleX(0.9242);transform-origin:0 0;">Query executed successfully.</span>
<span class="t" id="t68" style="left:1555.4px;top:985.55px;font-size:12.5px;color:#262626;font-family:'Liberation Sans', sans-serif;transform:scaleX(0.9069);transform-origin:0 0;">(local)\SRV22 (16.0 RTM)</span>
<span class="t" id="t69" style="left:1697.3px;top:985.55px;font-size:12.5px;color:#262626;font-family:'Liberation Sans', sans-serif;transform:scaleX(0.8842);transform-origin:0 0;">sa (54)</span>
<span class="t" id="t70" style="left:1744px;top:985.55px;font-size:12.5px;color:#262626;font-family:'Liberation Sans', sans-serif;transform:scaleX(0.8545);transform-origin:0 0;">Test</span>
<span class="t" id="t71" style="left:1775.9px;top:985.55px;font-size:12.5px;color:#262626;font-family:'Liberation Sans', sans-serif;transform:scaleX(0.9246);transform-origin:0 0;">00:00:00</span>
<span class="t" id="t72" style="left:1833.6px;top:985.55px;font-size:12.5px;color:#262626;font-family:'Liberation Sans', sans-serif;transform:scaleX(0.9341);transform-origin:0 0;">0 rows</span>
<div style="position:absolute;left:1550px;top:984px;width:1.2px;height:15.5px;background:#f8f3c8;"></div>
<div style="position:absolute;left:1691px;top:984px;width:1.2px;height:15.5px;background:#f8f3c8;"></div>
<div style="position:absolute;left:1738px;top:984px;width:1.2px;height:15.5px;background:#f8f3c8;"></div>
<div style="position:absolute;left:1770px;top:984px;width:1.2px;height:15.5px;background:#f8f3c8;"></div>
<div style="position:absolute;left:1828px;top:984px;width:1.2px;height:15.5px;background:#f8f3c8;"></div>
<svg style="left:0;top:1008px" width="24" height="24" viewBox="0 1008 24 24"><path d="M6.6 1016.2H18.4L15.8 1026H4Z" fill="none" stroke="#e4f1fb" stroke-width="1.3"/></svg>
<span class="t" id="t73" style="left:27px;top:1015.25px;font-size:12.5px;color:#ffffff;font-family:'Liberation Sans', sans-serif;transform:scaleX(0.8854);transform-origin:0 0;">Ready</span>
<span class="t" id="t74" style="left:1159.5px;top:1015.25px;font-size:12.5px;color:#ffffff;font-family:'Liberation Sans', sans-serif;transform:scaleX(0.8709);transform-origin:0 0;">Ln 1</span>
<span class="t" id="t75" style="left:1251.7px;top:1015.25px;font-size:12.5px;color:#ffffff;font-family:'Liberation Sans', sans-serif;transform:scaleX(0.9148);transform-origin:0 0;">Col 1</span>
<span class="t" id="t76" style="left:1343.4px;top:1015.25px;font-size:12.5px;color:#ffffff;font-family:'Liberation Sans', sans-serif;transform:scaleX(0.8862);transform-origin:0 0;">Ch 1</span>
<span class="t" id="t77" style="left:1480.2px;top:1015.25px;font-size:12.5px;color:#ffffff;font-family:'Liberation Sans', sans-serif;transform:scaleX(0.8540);transform-origin:0 0;">INS</span>
<div class="t" style="left:1894.2px;top:116.2px;font-size:12px;color:#f0f0f0;writing-mode:vertical-rl;letter-spacing:-0.2px;">Properties</div>
<div style="position:absolute;left:12px;top:59.2px;width:1.3px;height:1.3px;background:#7f8aa6;"></div><div style="position:absolute;left:16.6px;top:59.2px;width:1.3px;height:1.3px;background:#7f8aa6;"></div><div style="position:absolute;left:14.3px;top:61.53px;width:1.3px;height:1.3px;background:#7f8aa6;"></div><div style="position:absolute;left:12px;top:63.86px;width:1.3px;height:1.3px;background:#7f8aa6;"></div><div style="position:absolute;left:16.6px;top:63.86px;width:1.3px;height:1.3px;background:#7f8aa6;"></div><div style="position:absolute;left:14.3px;top:66.19px;width:1.3px;height:1.3px;background:#7f8aa6;"></div><div style="position:absolute;left:12px;top:68.52px;width:1.3px;height:1.3px;background:#7f8aa6;"></div><div style="position:absolute;left:16.6px;top:68.52px;width:1.3px;height:1.3px;background:#7f8aa6;"></div><div style="position:absolute;left:14.3px;top:70.85px;width:1.3px;height:1.3px;background:#7f8aa6;"></div><div style="position:absolute;left:12px;top:73.18px;width:1.3px;height:1.3px;background:#7f8aa6;"></div><div style="position:absolute;left:16.6px;top:73.18px;width:1.3px;height:1.3px;background:#7f8aa6;"></div><div style="position:absolute;left:14.3px;top:75.51px;width:1.3px;height:1.3px;background:#7f8aa6;"></div><div style="position:absolute;left:12px;top:77.84px;width:1.3px;height:1.3px;background:#7f8aa6;"></div><div style="position:absolute;left:16.6px;top:77.84px;width:1.3px;height:1.3px;background:#7f8aa6;"></div>
<svg style="left:25.7px;top:63.4px" width="12.6" height="12.6" viewBox="0 0 16 16" preserveAspectRatio="none"><circle cx="8" cy="8" r="8" fill="#00539c"/><path d="M9.3 3.8L4.8 8L9.3 12.2M5 8H12.6" stroke="#fff" stroke-width="2.1" fill="none"/></svg>
<svg style="left:46.4px;top:67.9px" width="6.2" height="3.4" viewBox="0 0 6 3.4" preserveAspectRatio="none"><path d="M0 0H6L3 3.4Z" fill="#1c2740"/></svg>
<svg style="left:61px;top:63.4px" width="12.6" height="12.6" viewBox="0 0 16 16" preserveAspectRatio="none"><circle cx="8" cy="8" r="8" fill="#b4b9c6"/><circle cx="8" cy="8" r="6" fill="#c4c9d6"/><path d="M6.7 4.3L10.8 8L6.7 11.7M10.6 8H3.8" stroke="#e3e7f0" stroke-width="2" fill="none"/></svg>
<div style="position:absolute;left:80.9px;top:59px;width:1.3px;height:21px;background:#8a94ab;"></div>
<svg style="left:92.6px;top:62.6px" width="14.2" height="13.9" viewBox="0 0 16 16" preserveAspectRatio="none"><path d="M4.60 3.80L8.00 3.80M4.37 4.37L6.77 6.77M3.80 4.60L3.80 8.00M3.23 4.37L0.83 6.77M3.00 3.80L-0.40 3.80M3.23 3.23L0.83 0.83M3.80 3.00L3.80 -0.40M4.37 3.23L6.77 0.83" stroke="#d9841c" stroke-width="1.3" fill="none"/><path d="M8 2.2H11.5L14.8 5.5V9" stroke="#424242" stroke-width="1.4" fill="none"/><path d="M2.2 9.5V14.3H4.5" stroke="#424242" stroke-width="1.4" fill="none"/><path d="M6 6.8H11L14 9.6V15.2H6Z" fill="#e9e9ee" stroke="#424242" stroke-width="1.5"/></svg>
<svg style="left:114.9px;top:67.9px" width="6.2" height="3.4" viewBox="0 0 6 3.4" preserveAspectRatio="none"><path d="M0 0H6L3 3.4Z" fill="#1c2740"/></svg>
<svg style="left:129.6px;top:62.6px" width="14.3" height="13.9" viewBox="0 0 16 16" preserveAspectRatio="none"><path d="M4.40 3.60L7.60 3.60M4.17 4.17L6.43 6.43M3.60 4.40L3.60 7.60M3.03 4.17L0.77 6.43M2.80 3.60L-0.40 3.60M3.03 3.03L0.77 0.77M3.60 2.80L3.60 -0.40M4.17 3.03L6.43 0.77" stroke="#c2c6d0" stroke-width="1.2" fill="none"/><rect x="5.8" y="6" width="9.2" height="9.2" fill="#d9dde8" stroke="#b0b5c0" stroke-width="1.6"/></svg>
<svg style="left:151.2px;top:67.9px" width="6.2" height="3.4" viewBox="0 0 6 3.4" preserveAspectRatio="none"><path d="M0 0H6L3 3.4Z" fill="#8d929e"/></svg>
<svg style="left:164.8px;top:62.2px" width="14.8" height="13.8" viewBox="0 0 16 16" preserveAspectRatio="none"><path d="M7 4H15.2V14H7Z" fill="#e6e1dc" stroke="#dcb67a" stroke-width="1"/><path d="M0.5 9.3H12L15.5 15.6H3.2Z" fill="#dca85a"/><path d="M1.6 7.8C0.8 3.6 4 2.6 7.4 2.9" stroke="#00539c" stroke-width="1.7" fill="none"/><path d="M6.2 0L10 2.9L6.2 5.8Z" fill="#00539c"/></svg>
<svg style="left:188.2px;top:63px" width="12.6" height="12.2" viewBox="0 0 16 16" preserveAspectRatio="none"><path d="M0 0H12.5L16 3.5V16H0Z" fill="#00539c"/><rect x="6" y="0" width="6" height="5" fill="#cfd6e5"/><rect x="9.2" y="0.6" width="1.9" height="3.6" fill="#00539c"/></svg>
<svg style="left:210.2px;top:61.8px" width="14.4" height="14" viewBox="0 0 16 16" preserveAspectRatio="none"><path d="M7.4 0H13.6L16 2.4V9.6H7.4Z" fill="#00539c"/><rect x="10.8" y="0" width="3" height="2.4" fill="#cfd6e5"/><path d="M0 6.6H6.2L9 9.4V16H0Z" fill="#00539c" stroke="#cfd6e5" stroke-width="0.0"/><rect x="3.2" y="6.6" width="3" height="2.4" fill="#cfd6e5"/><path d="M7.4 5.8V9.6H10" stroke="#cfd6e5" stroke-width="0.9" fill="none"/></svg>
<div style="position:absolute;left:231.3px;top:59px;width:1.3px;height:21px;background:#8a94ab;"></div>
<svg style="left:241.3px;top:62.5px" width="14.4" height="13.8" viewBox="0 0 16 16" preserveAspectRatio="none"><path d="M4.6 0.6H11.6L15.3 4.3V13.6H4.6Z" fill="#f3f3f5" stroke="#424242" stroke-width="1.2"/><path d="M6.6 4H12.6M6.6 6.2H13M6.6 8.4H13M8 10.6H13" stroke="#424242" stroke-width="1"/><path d="M0.2 11.2V14.6A3 1.4 0 0 0 6.4 14.6V11.2Z" fill="#424242"/><ellipse cx="3.3" cy="11.2" rx="3.1" ry="1.5" fill="#424242"/><ellipse cx="3.3" cy="11" rx="2.1" ry="0.8" fill="#c8c8c8"/></svg>
<svg style="left:332.3px;top:62.5px" width="14.4" height="13.8" viewBox="0 0 16 16" preserveAspectRatio="none"><path d="M4.6 0.6H11.6L15.3 4.3V13.6H4.6Z" fill="#f3f3f5" stroke="#424242" stroke-width="1.2"/><path d="M6.6 4H12.6M6.6 6.2H13M6.6 8.4H13M8 10.6H13" stroke="#424242" stroke-width="1"/><path d="M0.2 11.2V14.6A3 1.4 0 0 0 6.4 14.6V11.2Z" fill="#424242"/><ellipse cx="3.3" cy="11.2" rx="3.1" ry="1.5" fill="#424242"/><ellipse cx="3.3" cy="11" rx="2.1" ry="0.8" fill="#c8c8c8"/></svg>
<svg style="left:354.6px;top:62.5px" width="14.4" height="13.8" viewBox="0 0 16 16" preserveAspectRatio="none"><path d="M8 0.6L14.6 4L8 7.4L1.4 4Z" fill="none" stroke="#424242" stroke-width="1.2"/><path d="M1.4 4V9.2M14.6 4V9.2M8 7.4V10" stroke="#424242" stroke-width="1.2" fill="none"/><path transform="translate(1.60,11.20) scale(1.240,0.900)" d="M0 5V0L1.5 2.6L3 0V5" fill="none" stroke="#333333" stroke-width="1.00" vector-effect="non-scaling-stroke"/><path transform="translate(6.14,11.20) scale(1.240,0.900)" d="M0 0V5H1.5Q3 5 3 3.5V1.5Q3 0 1.5 0H0" fill="none" stroke="#333333" stroke-width="1.00" vector-effect="non-scaling-stroke"/><path transform="translate(10.68,11.20) scale(1.240,0.900)" d="M0 0L3 5M3 0L0 5" fill="none" stroke="#333333" stroke-width="1.00" vector-effect="non-scaling-stroke"/></svg>
<svg style="left:377.2px;top:62.5px" width="14.4" height="13.8" viewBox="0 0 16 16" preserveAspectRatio="none"><path d="M8 0.6L14.6 4L8 7.4L1.4 4Z" fill="none" stroke="#424242" stroke-width="1.2"/><path d="M1.4 4V9.2M14.6 4V9.2M8 7.4V10" stroke="#424242" stroke-width="1.2" fill="none"/><path transform="translate(1.60,11.20) scale(1.240,0.900)" d="M0 0V5H1.5Q3 5 3 3.5V1.5Q3 0 1.5 0H0" fill="none" stroke="#333333" stroke-width="1.00" vector-effect="non-scaling-stroke"/><path transform="translate(6.14,11.20) scale(1.240,0.900)" d="M0 5V0L1.5 2.6L3 0V5" fill="none" stroke="#333333" stroke-width="1.00" vector-effect="non-scaling-stroke"/><path transform="translate(10.68,11.20) scale(1.240,0.900)" d="M0 0L3 5M3 0L0 5" fill="none" stroke="#333333" stroke-width="1.00" vector-effect="non-scaling-stroke"/></svg>
<svg style="left:400.4px;top:62.5px" width="15.6" height="13.8" viewBox="0 0 16 16" preserveAspectRatio="none"><path d="M8 0.6L14.6 4L8 7.4L1.4 4Z" fill="none" stroke="#424242" stroke-width="1.2"/><path d="M1.4 4V9.2M14.6 4V9.2M8 7.4V10" stroke="#424242" stroke-width="1.2" fill="none"/><path transform="translate(0.40,11.20) scale(1.087,0.900)" d="M0 0L3 5M3 0L0 5" fill="none" stroke="#333333" stroke-width="1.00" vector-effect="non-scaling-stroke"/><path transform="translate(4.38,11.20) scale(1.087,0.900)" d="M0 5V0L1.5 2.6L3 0V5" fill="none" stroke="#333333" stroke-width="1.00" vector-effect="non-scaling-stroke"/><path transform="translate(8.36,11.20) scale(1.087,0.900)" d="M0 0V5H3" fill="none" stroke="#333333" stroke-width="1.00" vector-effect="non-scaling-stroke"/><path transform="translate(12.34,11.20) scale(1.087,0.900)" d="M0 5L1.5 0L3 5M0.7 3.4H2.3" fill="none" stroke="#333333" stroke-width="1.00" vector-effect="non-scaling-stroke"/></svg>
<div style="position:absolute;left:421.5px;top:59px;width:1.3px;height:21px;background:#8a94ab;"></div>
<svg style="left:432.5px;top:62.3px" width="12.3" height="14.1" viewBox="0 0 16 16" preserveAspectRatio="none"><path d="M3.4 0L10.6 10.6M12.6 0L5.4 10.6" stroke="#424242" stroke-width="1.7" fill="none"/><circle cx="3.4" cy="12.9" r="2.5" fill="none" stroke="#424242" stroke-width="1.5"/><circle cx="12.6" cy="12.9" r="2.5" fill="none" stroke="#424242" stroke-width="1.5"/></svg>
<svg style="left:455px;top:62.5px" width="12.8" height="13.5" viewBox="0 0 16 16" preserveAspectRatio="none"><path d="M5.2 3V0.8H15.2V12H11.5" fill="none" stroke="#424242" stroke-width="1.5"/><rect x="0.8" y="4" width="10" height="11.2" fill="#e4e6ee" stroke="#424242" stroke-width="1.5"/></svg>
<svg style="left:477px;top:62px" width="12.8" height="14" viewBox="0 0 16 16" preserveAspectRatio="none"><path d="M5.4 3.8C5.4 -0.6 11.6 -0.6 11.6 3.8" fill="none" stroke="#424242" stroke-width="1.4"/><path d="M3 8V3.8H15.2V15.2H9" fill="none" stroke="#424242" stroke-width="1.5"/><rect x="0.8" y="8.6" width="7.6" height="6.6" fill="#e4e6ee" stroke="#424242" stroke-width="1.5"/></svg>
<div style="position:absolute;left:498px;top:59px;width:1.3px;height:21px;background:#8a94ab;"></div>
<svg style="left:509px;top:62.4px" width="12.8" height="12.8" viewBox="0 0 16 16" preserveAspectRatio="none"><path d="M3 5.2C7 0.2 15.6 1.6 14.4 8C13.8 11 10 13.2 6.4 15.4" fill="none" stroke="#00539c" stroke-width="2.6"/><path d="M0.4 0.6L0.8 8.2L7.6 6.4Z" fill="#00539c"/></svg>
<svg style="left:530.7px;top:67.9px" width="6.2" height="3.4" viewBox="0 0 6 3.4" preserveAspectRatio="none"><path d="M0 0H6L3 3.4Z" fill="#1c2740"/></svg>
<svg style="left:545.2px;top:62.4px" width="12.4" height="12.8" viewBox="0 0 16 16" preserveAspectRatio="none"><path d="M13 5.2C9 0.2 0.4 1.6 1.6 8C2.2 11 6 13.2 9.6 15.4" fill="none" stroke="#b3b8c5" stroke-width="2.2"/><path d="M15.6 0.6L15.2 8.2L8.4 6.4Z" fill="#b3b8c5"/></svg>
<svg style="left:566.5px;top:67.9px" width="6.2" height="3.4" viewBox="0 0 6 3.4" preserveAspectRatio="none"><path d="M0 0H6L3 3.4Z" fill="#8d929e"/></svg>
<div style="position:absolute;left:578.7px;top:59px;width:1.3px;height:21px;background:#8a94ab;"></div>
<svg style="left:588.6px;top:61.9px" width="14.7" height="14.1" viewBox="0 0 16 16" preserveAspectRatio="none"><rect x="0.8" y="0.8" width="14.4" height="12" fill="#dfe2ea" stroke="#424242" stroke-width="1.5"/><path d="M1 8.5L5 5L8 7.5L15 1.2" fill="none" stroke="#424242" stroke-width="1.2"/><circle cx="4" cy="12.2" r="3.2" fill="#dfe2ea" stroke="#424242" stroke-width="1.3"/><path d="M4 10.4V12.4H5.4" stroke="#424242" stroke-width="0.9" fill="none"/></svg>
<div style="position:absolute;left:609.8px;top:59px;width:1.3px;height:21px;background:#8a94ab;"></div>
<svg style="left:631.3px;top:67.9px" width="6.2" height="3.4" viewBox="0 0 6 3.4" preserveAspectRatio="none"><path d="M0 0H6L3 3.4Z" fill="#8d929e"/></svg>
<div style="position:absolute;left:643.2px;top:59px;width:1.3px;height:21px;background:#8a94ab;"></div>
<svg style="left:654px;top:62.3px" width="14.2" height="13.9" viewBox="0 0 16 16" preserveAspectRatio="none"><path d="M5 2.2H9L10.2 0.4H16V10.6H5Z" fill="#dcb67a"/><path d="M10.6 1.2H15.2V2H10.2Z" fill="#efdcb8"/><circle cx="5.4" cy="10.2" r="2.7" fill="#dfe6f2" stroke="#00539c" stroke-width="1.7"/><path d="M3.4 12.2L0.6 15.4" stroke="#00539c" stroke-width="2"/></svg>
<svg style="left:849.3px;top:68.1px" width="6.2" height="3.4" viewBox="0 0 6 3.4" preserveAspectRatio="none"><path d="M0 0H6L3 3.4Z" fill="#1c2740"/></svg>
<div style="position:absolute;left:866.5px;top:59px;width:1.3px;height:21px;background:#8a94ab;"></div>
<svg style="left:875.6px;top:62px" width="15.9" height="14" viewBox="0 0 16 16" preserveAspectRatio="none"><path d="M3.4 6V1H15.2V12.6H11.5" fill="none" stroke="#424242" stroke-width="1.4"/><rect x="3.4" y="0.6" width="11.8" height="2.6" fill="#424242"/><path d="M0 9.2L1.4 8.4L4.6 11L8 7L10 7.9V15.1L8 16L4.6 12L1.4 14.6L0 13.8L2 11.5ZM8 9.6L5.8 11.5L8 13.4Z" fill="#68217a" fill-rule="evenodd"/></svg>
<svg style="left:899.4px;top:62.2px" width="14.2" height="14" viewBox="0 0 16 16" preserveAspectRatio="none"><path d="M0.6 13.4L8 6A4.8 4.8 0 0 1 13.6 0.4L10.8 3.2L11.4 5.2L13.4 5.8L16 3.2A4.8 4.8 0 0 1 10.4 8.4L3 15.8A1.7 1.7 0 0 1 0.6 13.4Z" fill="#424242"/></svg>
<svg style="left:922.2px;top:62.8px" width="14.6" height="13" viewBox="0 0 16 16" preserveAspectRatio="none"><path d="M5 4.4V1.4H11V4.4" fill="none" stroke="#424242" stroke-width="1.8"/><rect x="0" y="4.4" width="16" height="10.8" fill="#424242"/><rect x="0" y="8.6" width="16" height="1.2" fill="#cfd6e5"/><rect x="6.6" y="7.6" width="2.8" height="3.2" fill="#424242" stroke="#cfd6e5" stroke-width="0.8"/></svg>
<svg style="left:945px;top:62.4px" width="15.2" height="14" viewBox="0 0 16 16" preserveAspectRatio="none"><rect x="0.7" y="1.8" width="14.6" height="12.4" fill="#dfe2ea" stroke="#424242" stroke-width="1.4"/><path d="M3.2 5L6.6 7.8L3.2 10.6" fill="none" stroke="#424242" stroke-width="1.3"/></svg>
<svg style="left:967.5px;top:67.9px" width="6.2" height="3.4" viewBox="0 0 6 3.4" preserveAspectRatio="none"><path d="M0 0H6L3 3.4Z" fill="#1c2740"/></svg>
<svg style="left:981px;top:73.4px" width="6.2" height="5.4" viewBox="0 0 6 5.4" preserveAspectRatio="none"><rect x="0" y="0" width="6" height="1.2" fill="#1c2740"/><path d="M0 2.3H6L3 5.4Z" fill="#1c2740"/></svg>
<div style="position:absolute;left:12px;top:87.6px;width:1.3px;height:1.3px;background:#7f8aa6;"></div><div style="position:absolute;left:16.6px;top:87.6px;width:1.3px;height:1.3px;background:#7f8aa6;"></div><div style="position:absolute;left:14.3px;top:89.93px;width:1.3px;height:1.3px;background:#7f8aa6;"></div><div style="position:absolute;left:12px;top:92.26px;width:1.3px;height:1.3px;background:#7f8aa6;"></div><div style="position:absolute;left:16.6px;top:92.26px;width:1.3px;height:1.3px;background:#7f8aa6;"></div><div style="position:absolute;left:14.3px;top:94.59px;width:1.3px;height:1.3px;background:#7f8aa6;"></div><div style="position:absolute;left:12px;top:96.92px;width:1.3px;height:1.3px;background:#7f8aa6;"></div><div style="position:absolute;left:16.6px;top:96.92px;width:1.3px;height:1.3px;background:#7f8aa6;"></div><div style="position:absolute;left:14.3px;top:99.25px;width:1.3px;height:1.3px;background:#7f8aa6;"></div><div style="position:absolute;left:12px;top:101.58px;width:1.3px;height:1.3px;background:#7f8aa6;"></div><div style="position:absolute;left:16.6px;top:101.58px;width:1.3px;height:1.3px;background:#7f8aa6;"></div><div style="position:absolute;left:14.3px;top:103.91px;width:1.3px;height:1.3px;background:#7f8aa6;"></div>
<svg style="left:27px;top:89.4px" width="7.6" height="14" viewBox="0 0 14 16" preserveAspectRatio="none"><path d="M2.8 0H4.8V5H2.8ZM9.2 0H11.2V5H9.2Z" fill="#b3b8c5"/><path d="M0 4.6H14V7.6H12.6V9.4Q12.4 11.6 8.8 11.8V16H5.2V11.8Q1.6 11.6 1.4 9.4V7.6H0Z" fill="#b3b8c5"/></svg>
<svg style="left:46.2px;top:89px" width="14.2" height="14.4" viewBox="0 0 16 16" preserveAspectRatio="none"><g transform="translate(8.4,0) scale(0.54,1)"><path d="M2.8 0H4.8V5H2.8ZM9.2 0H11.2V5H9.2Z" fill="#2a2a2a"/><path d="M0 4.6H14V7.6H12.6V9.4Q12.4 11.6 8.8 11.8V16H5.2V11.8Q1.6 11.6 1.4 9.4V7.6H0Z" fill="#2a2a2a"/></g><path d="M1.4 1.6L8 8.4" stroke="#00539c" stroke-width="2.7"/><path d="M0 0L2.8 0.6L0.6 2.8Z" fill="#00539c"/><path d="M7 9.4L9 7.4L10.6 10.6Z" fill="#2a2a2a"/></svg>
<div style="position:absolute;left:67.2px;top:87.5px;width:1.3px;height:18px;background:#8a94ab;"></div>
<svg style="left:225.2px;top:95.9px" width="6.2" height="3.4" viewBox="0 0 6 3.4" preserveAspectRatio="none"><path d="M0 0H6L3 3.4Z" fill="#1c2740"/></svg>
<div style="position:absolute;left:241.8px;top:87.5px;width:1.3px;height:18px;background:#8a94ab;"></div>
<svg style="left:254.6px;top:90.4px" width="9.2" height="12.2" viewBox="0 0 16 16" preserveAspectRatio="none"><path d="M2 2.4L13.4 8L2 13.6Z" fill="none" stroke="#388a34" stroke-width="2.6" stroke-linejoin="miter"/></svg>
<svg style="left:326.6px;top:92.2px" width="8.2" height="8.2" viewBox="0 0 16 16" preserveAspectRatio="none"><rect x="0" y="0" width="16" height="16" fill="#a9aebb"/></svg>
<svg style="left:347.2px;top:90.2px" width="12.2" height="12.2" viewBox="0 0 16 16" preserveAspectRatio="none"><path d="M0.4 8.6L3.4 6.6L6 11C8 6 11 2.4 14.6 0.2L15.8 1.4C12 5.6 9.4 10.6 7.6 16H4.6Z" fill="#1e1e1e"/></svg>
<svg style="left:368.6px;top:89.2px" width="14.6" height="14.2" viewBox="0 0 16 16" preserveAspectRatio="none"><rect x="1" y="0.8" width="4.6" height="4.6" fill="#e4e6ee" stroke="#424242" stroke-width="1.2"/><rect x="10.6" y="0.8" width="4.8" height="4.6" fill="#e4e6ee" stroke="#424242" stroke-width="1.2"/><rect x="1" y="10.6" width="4.6" height="4.6" fill="#e4e6ee" stroke="#424242" stroke-width="1.2"/><path d="M10.4 3.1H6.4M7.8 1.7L6.2 3.1L7.8 4.5M3.3 10.4V6.2M1.9 7.6L3.3 6L4.7 7.6" stroke="#424242" stroke-width="1" fill="none"/><path d="M10.4 10.4H15.4L12.9 13.4Z" fill="none" stroke="#424242" stroke-width="1.1"/></svg>
<svg style="left:391.4px;top:89.4px" width="14.4" height="13.8" viewBox="0 0 16 16" preserveAspectRatio="none"><path d="M3 3V1H15.2V11H13" fill="none" stroke="#424242" stroke-width="1.3"/><rect x="3" y="0.4" width="12.2" height="2" fill="#424242"/><rect x="0.7" y="4.2" width="12.4" height="10.6" fill="#dfe2ea" stroke="#424242" stroke-width="1.4"/><rect x="0.7" y="4.2" width="12.4" height="2" fill="#424242"/><rect x="3.2" y="8" width="7.4" height="4.2" fill="none" stroke="#424242" stroke-width="1"/></svg>
<div style="position:absolute;left:410px;top:85px;width:23px;height:23px;background:#fdfcf3;border:1px solid #465d8c;box-sizing:border-box;box-shadow:inset 0 0 0 0.5px #8a9bbd;"></div>
<svg style="left:416px;top:89.4px" width="10.6" height="14" viewBox="0 0 16 16" preserveAspectRatio="none"><rect x="1" y="0.8" width="14" height="14.4" fill="#e2e4ec" stroke="#424242" stroke-width="1.5"/><path d="M1 8.4H15" stroke="#424242" stroke-width="1.3"/><path d="M5 11H15M5 13.4H15M5 8.4V15" stroke="#424242" stroke-width="0.9"/></svg>
<div style="position:absolute;left:435.5px;top:87.5px;width:1.3px;height:18px;background:#8a94ab;"></div>
<svg style="left:445.4px;top:89.2px" width="14.6" height="14.2" viewBox="0 0 16 16" preserveAspectRatio="none"><rect x="1" y="0.8" width="4.6" height="4.6" fill="#e4e6ee" stroke="#424242" stroke-width="1.2"/><rect x="10.6" y="0.8" width="4.8" height="4.6" fill="#e4e6ee" stroke="#424242" stroke-width="1.2"/><rect x="1" y="10.6" width="4.6" height="4.6" fill="#e4e6ee" stroke="#424242" stroke-width="1.2"/><path d="M10.4 3.1H6.4M7.8 1.7L6.2 3.1L7.8 4.5M3.3 10.4V6.2M1.9 7.6L3.3 6L4.7 7.6" stroke="#424242" stroke-width="1" fill="none"/></svg>
<svg style="left:468px;top:89.2px" width="14.8" height="14.2" viewBox="0 0 16 16" preserveAspectRatio="none"><rect x="1" y="0.8" width="4.6" height="4.6" fill="#e4e6ee" stroke="#424242" stroke-width="1.2"/><rect x="10.6" y="0.8" width="4.8" height="4.6" fill="#e4e6ee" stroke="#424242" stroke-width="1.2"/><rect x="1" y="10.6" width="4.6" height="4.6" fill="#e4e6ee" stroke="#424242" stroke-width="1.2"/><path d="M10.4 3.1H6.4M7.8 1.7L6.2 3.1L7.8 4.5M3.3 10.4V6.2M1.9 7.6L3.3 6L4.7 7.6" stroke="#424242" stroke-width="1" fill="none"/><circle cx="12" cy="12" r="4" fill="#1e9e3e"/><path d="M9.8 12L11.4 13.8L14.2 10.4" stroke="#fff" stroke-width="1.3" fill="none"/></svg>
<svg style="left:490.8px;top:89.2px" width="14.6" height="14.2" viewBox="0 0 16 16" preserveAspectRatio="none"><rect x="6.6" y="0.6" width="8.8" height="9.4" fill="#e2e4ec" stroke="#424242" stroke-width="1.2"/><path d="M9 9V6M11 9V3.4M13 9V5" stroke="#424242" stroke-width="1.1"/><rect x="0" y="4.6" width="8.4" height="11.4" fill="#424242"/><path d="M1 7H7.4M1 9.2H7.4" stroke="#9aa0ad" stroke-width="0.9"/><rect x="5.6" y="13" width="1.4" height="1.4" fill="#cfd6e5"/></svg>
<div style="position:absolute;left:512.1px;top:87.5px;width:1.3px;height:18px;background:#8a94ab;"></div>
<svg style="left:522px;top:89.2px" width="14.8" height="14.2" viewBox="0 0 16 16" preserveAspectRatio="none"><path d="M5 0.6H15.3V14H8.5" fill="#e6e8ef" stroke="#424242" stroke-width="1.2"/><path d="M7.4 3.4H13.4M7.4 5.8H13.4M7.4 8.2H13.4M9 10.6H13.4" stroke="#424242" stroke-width="0.9"/><rect x="0" y="9.4" width="8" height="6.6" fill="#424242"/><text x="4" y="15" text-anchor="middle" font-family="Liberation Sans, sans-serif" font-size="5.6" font-weight="bold" textLength="6.4" lengthAdjust="spacingAndGlyphs" fill="#e8e8e8">ab</text></svg>
<div style="position:absolute;left:541px;top:85px;width:22px;height:23px;background:#fdfcf3;border:1px solid #465d8c;box-sizing:border-box;box-shadow:inset 0 0 0 0.5px #8a9bbd;"></div>
<svg style="left:544.6px;top:89.2px" width="14.8" height="14.2" viewBox="0 0 16 16" preserveAspectRatio="none"><rect x="1.6" y="0.6" width="13.8" height="13" fill="#f2f2f2" stroke="#424242" stroke-width="1.2"/><rect x="1.6" y="0.6" width="13.8" height="3.2" fill="#424242"/><path d="M1.6 7H15.4M1.6 10.4H15.4M6.2 3.8V13.6M10.8 3.8V13.6" stroke="#424242" stroke-width="1.1"/><rect x="0" y="9.4" width="8" height="6.6" fill="#424242"/><text x="4" y="15" text-anchor="middle" font-family="Liberation Sans, sans-serif" font-size="5.6" font-weight="bold" textLength="6.4" lengthAdjust="spacingAndGlyphs" fill="#e8e8e8">01</text></svg>
<svg style="left:567.2px;top:89.2px" width="14.8" height="14.2" viewBox="0 0 16 16" preserveAspectRatio="none"><path d="M5.6 8.8V0.7H11.5L15.3 4.5V13.4H8.6" fill="#e6e8ef" stroke="#424242" stroke-width="1.3"/><path d="M11.4 0.8V4.6H15.2" fill="none" stroke="#424242" stroke-width="1.1"/><rect x="0" y="9.4" width="8" height="6.6" fill="#424242"/><text x="4" y="15" text-anchor="middle" font-family="Liberation Sans, sans-serif" font-size="5.6" font-weight="bold" textLength="6.4" lengthAdjust="spacingAndGlyphs" fill="#e8e8e8">01</text></svg>
<div style="position:absolute;left:588.7px;top:87.5px;width:1.3px;height:18px;background:#8a94ab;"></div>
<svg style="left:600.4px;top:90.4px" width="11.2" height="12" viewBox="0 0 16 16" preserveAspectRatio="none"><path d="M0 0.8H2" stroke="#424242" stroke-width="1.1"/><path d="M4.6 1H16M4.6 3.8H16M4.6 6.6H16" stroke="#58a858" stroke-width="1.5"/><path d="M2.6 9.6H16M6 12.4H16M6 15.2H16" stroke="#6a6a6a" stroke-width="1.2"/></svg>
<svg style="left:621.6px;top:90.4px" width="13.2" height="12.4" viewBox="0 0 16 16" preserveAspectRatio="none"><path d="M1.6 3.2C3.4 0.6 7.6 1.4 6.8 4.6C6.4 6 5 6.8 3.4 7.8" fill="none" stroke="#00539c" stroke-width="1.5"/><path d="M0 0.2L0.2 4.4L4 3.4Z" fill="#00539c"/><path d="M8 3.4H16M8 6.2H16M6.6 9H16M5 11.8H16M8 14.8H16" stroke="#6a6a6a" stroke-width="1.2"/></svg>
<div style="position:absolute;left:642.9px;top:87.5px;width:1.3px;height:18px;background:#8a94ab;"></div>
<svg style="left:652.6px;top:90px" width="15.4" height="13.4" viewBox="0 0 16 16" preserveAspectRatio="none"><path d="M3.4 1H11.6M3.4 15H11.6" stroke="#5a5a5a" stroke-width="1.2"/><path d="M0 7.4H6.4" stroke="#424242" stroke-width="2.4"/><path d="M15.8 7.6H9" stroke="#00539c" stroke-width="2.2"/><path d="M11.6 3.6L7.4 7.6L11.6 11.6" fill="none" stroke="#00539c" stroke-width="2.2"/></svg>
<svg style="left:675.2px;top:90px" width="14.8" height="13.4" viewBox="0 0 16 16" preserveAspectRatio="none"><path d="M4.4 1H12.6M4.4 15H12.6" stroke="#5a5a5a" stroke-width="1.2"/><path d="M9.6 7.4H16" stroke="#424242" stroke-width="2.4"/><path d="M0.2 7.6H7" stroke="#00539c" stroke-width="2.2"/><path d="M4.4 3.6L8.6 7.6L4.4 11.6" fill="none" stroke="#00539c" stroke-width="2.2"/></svg>
<div style="position:absolute;left:696.5px;top:87.5px;width:1.3px;height:18px;background:#8a94ab;"></div>
<svg style="left:706.6px;top:90px" width="15.4" height="12.6" viewBox="0 0 16 16" preserveAspectRatio="none"><path d="M0 3H5" stroke="#00539c" stroke-width="1.5"/><path d="M3 0.4L6 3L3 5.6" fill="none" stroke="#00539c" stroke-width="1.5"/><text x="5.6" y="14.4" font-family="Liberation Sans, sans-serif" font-size="13" textLength="10.6" lengthAdjust="spacingAndGlyphs" fill="#333" stroke="#333" stroke-width="0.2">@</text></svg>
<svg style="left:729.4px;top:98.8px" width="6.2" height="5.4" viewBox="0 0 6 5.4" preserveAspectRatio="none"><rect x="0" y="0" width="6" height="1.2" fill="#1c2740"/><path d="M0 2.3H6L3 5.4Z" fill="#1c2740"/></svg>
<svg style="left:293.3px;top:126.1px" width="8" height="4.2" viewBox="0 0 6 3.4" preserveAspectRatio="none"><path d="M0 0H6L3 3.4Z" fill="#e6e9f0"/></svg>
<svg style="left:312.6px;top:123.6px" width="6.8" height="10.4" viewBox="0 0 8 11" preserveAspectRatio="none"><path d="M1.6 0.6H6.4M2.4 0.6V6M5.6 0.6V6M0.4 6.2H7.6M4 6.2V10.6" fill="none" stroke="#e6e9f0" stroke-width="1.1"/><rect x="4.4" y="1" width="1.2" height="5" fill="#e6e9f0"/></svg>
<svg style="left:329.2px;top:123.6px" width="9.4" height="8.6" viewBox="0 0 10 10" preserveAspectRatio="none"><path d="M0.6 0.6L9.4 9.4M9.4 0.6L0.6 9.4" stroke="#e6e9f0" stroke-width="1.5"/></svg>
<svg style="left:60.3px;top:152.2px" width="5.6" height="3.2" viewBox="0 0 6 3.4" preserveAspectRatio="none"><path d="M0 0H6L3 3.4Z" fill="#1c2740"/></svg>
<svg style="left:78.3px;top:146px" width="7.9" height="14.2" viewBox="0 0 14 16" preserveAspectRatio="none"><path d="M2.8 0H4.8V5H2.8ZM9.2 0H11.2V5H9.2Z" fill="#3a3a3a"/><path d="M0 4.6H14V7.6H12.6V9.4Q12.4 11.6 8.8 11.8V16H5.2V11.8Q1.6 11.6 1.4 9.4V7.6H0Z" fill="#3a3a3a"/></svg>
<svg style="left:97.6px;top:146px" width="14.4" height="14.2" viewBox="0 0 16 16" preserveAspectRatio="none"><g transform="translate(7.4,0) scale(0.6,1)"><path d="M2.8 0H4.8V5H2.8ZM9.2 0H11.2V5H9.2Z" fill="#3a3a3a"/><path d="M0 4.6H14V7.6H12.6V9.4Q12.4 11.6 8.8 11.8V16H5.2V11.8Q1.6 11.6 1.4 9.4V7.6H0Z" fill="#3a3a3a"/></g><path d="M0.3 0.3L6.2 6.6M6.2 0.3L0.3 6.6" stroke="#c8402a" stroke-width="1.7"/></svg>
<div style="position:absolute;left:123.2px;top:149px;width:8px;height:7.7px;background:#a9aebb;"></div>
<svg style="left:144.1px;top:148px" width="12" height="12" viewBox="0 0 16 16" preserveAspectRatio="none"><path d="M0 0H16L10.2 8V16H5.8V8Z" fill="#3a3a3a"/></svg>
<svg style="left:167px;top:146.2px" width="11.9" height="13.6" viewBox="0 0 16 16" preserveAspectRatio="none"><path d="M8 3.3A5.7 5.7 0 1 0 13.4 7" fill="none" stroke="#00539c" stroke-width="2.3"/><path d="M7.4 0L12.4 3.3L7.4 6.8Z" fill="#00539c"/></svg>
<svg style="left:188px;top:147.2px" width="14.8" height="11.4" viewBox="0 0 16 16" preserveAspectRatio="none"><path d="M0 8.6H3.8L5.4 5.6L7.5 14.4L9.7 0.6L11.7 11.2L12.9 8.6H16" fill="none" stroke="#3a3a3a" stroke-width="1.5" stroke-linejoin="round"/></svg>
<svg style="left:586.6px;top:124.2px" width="8.4" height="5.8" viewBox="0 0 8.4 6" preserveAspectRatio="none"><path d="M0.5 3H4M4 0.6V5.4M4 1.4H7.6V4.6H4M7.8 0.4V5.6" fill="none" stroke="#1e1e1e" stroke-width="0.9"/><rect x="4.4" y="3.4" width="3.2" height="1.2" fill="#1e1e1e"/></svg>
<svg style="left:604.8px;top:122.6px" width="9.4" height="8.6" viewBox="0 0 10 10" preserveAspectRatio="none"><path d="M0.6 0.6L9.4 9.4M9.4 0.6L0.6 9.4" stroke="#4a4326" stroke-width="1.2"/></svg>
<svg style="left:1878px;top:126.7px" width="7.6" height="3.8" viewBox="0 0 6 3.4" preserveAspectRatio="none"><path d="M0 0H6L3 3.4Z" fill="#d0d6e4"/></svg>
<svg style="left:0;top:0" width="40" height="32" viewBox="0 0 40 32"><path d="M13 10.2V19.4A5.6 1.6 0 0 0 24.2 19.4V10.2Z" fill="#fad500"/><path d="M13 10.2V19.4A5.6 1.6 0 0 0 18.4 21V10.2Z" fill="#fde46b"/><ellipse cx="18.6" cy="9.8" rx="5.6" ry="2.4" fill="#f0a84c"/><path d="M25.6 8.6H30V12.8" fill="none" stroke="#4aa24a" stroke-width="1.9"/><path d="M12.6 21.4V25.8H17" fill="none" stroke="#4aa24a" stroke-width="1.9"/><path d="M20 17.6L28.4 25.4M28.2 17.4L21.4 25.4" fill="none" stroke="#ec7a10" stroke-width="2"/><path d="M19.4 18.8L22.2 16.2L23 18.4Z" fill="#ec7a10"/><path d="M26.8 16.4C28 15.6 29.4 16 30 17.2L28.4 18L28.6 19C27.4 19.6 26.4 18.4 26.8 16.4Z" fill="#ec7a10"/></svg>
<div style="position:absolute;left:1830px;top:14.6px;width:9px;height:3.2px;background:#262626;"></div>
<svg style="left:1863px;top:8px" width="12" height="11" viewBox="0 0 12 11"><path d="M3.4 3V1H10.6V7.4H8.4" fill="none" stroke="#1e1e1e" stroke-width="1.5"/><rect x="1" y="3.6" width="7.2" height="6.4" fill="none" stroke="#1e1e1e" stroke-width="1.5"/></svg>
<svg style="left:1897.6px;top:9.8px" width="9.6" height="9.2" viewBox="0 0 10 10" preserveAspectRatio="none"><path d="M0.6 0.6L9.4 9.4M9.4 0.6L0.6 9.4" stroke="#1e1e1e" stroke-width="1.5"/></svg>
<svg style="left:1798px;top:8px" width="14" height="13" viewBox="0 0 14 13"><circle cx="9" cy="4.6" r="3.4" fill="none" stroke="#505050" stroke-width="1.7"/><path d="M6.4 7.2L1.2 12" stroke="#505050" stroke-width="2.2"/></svg>
</body></html>
